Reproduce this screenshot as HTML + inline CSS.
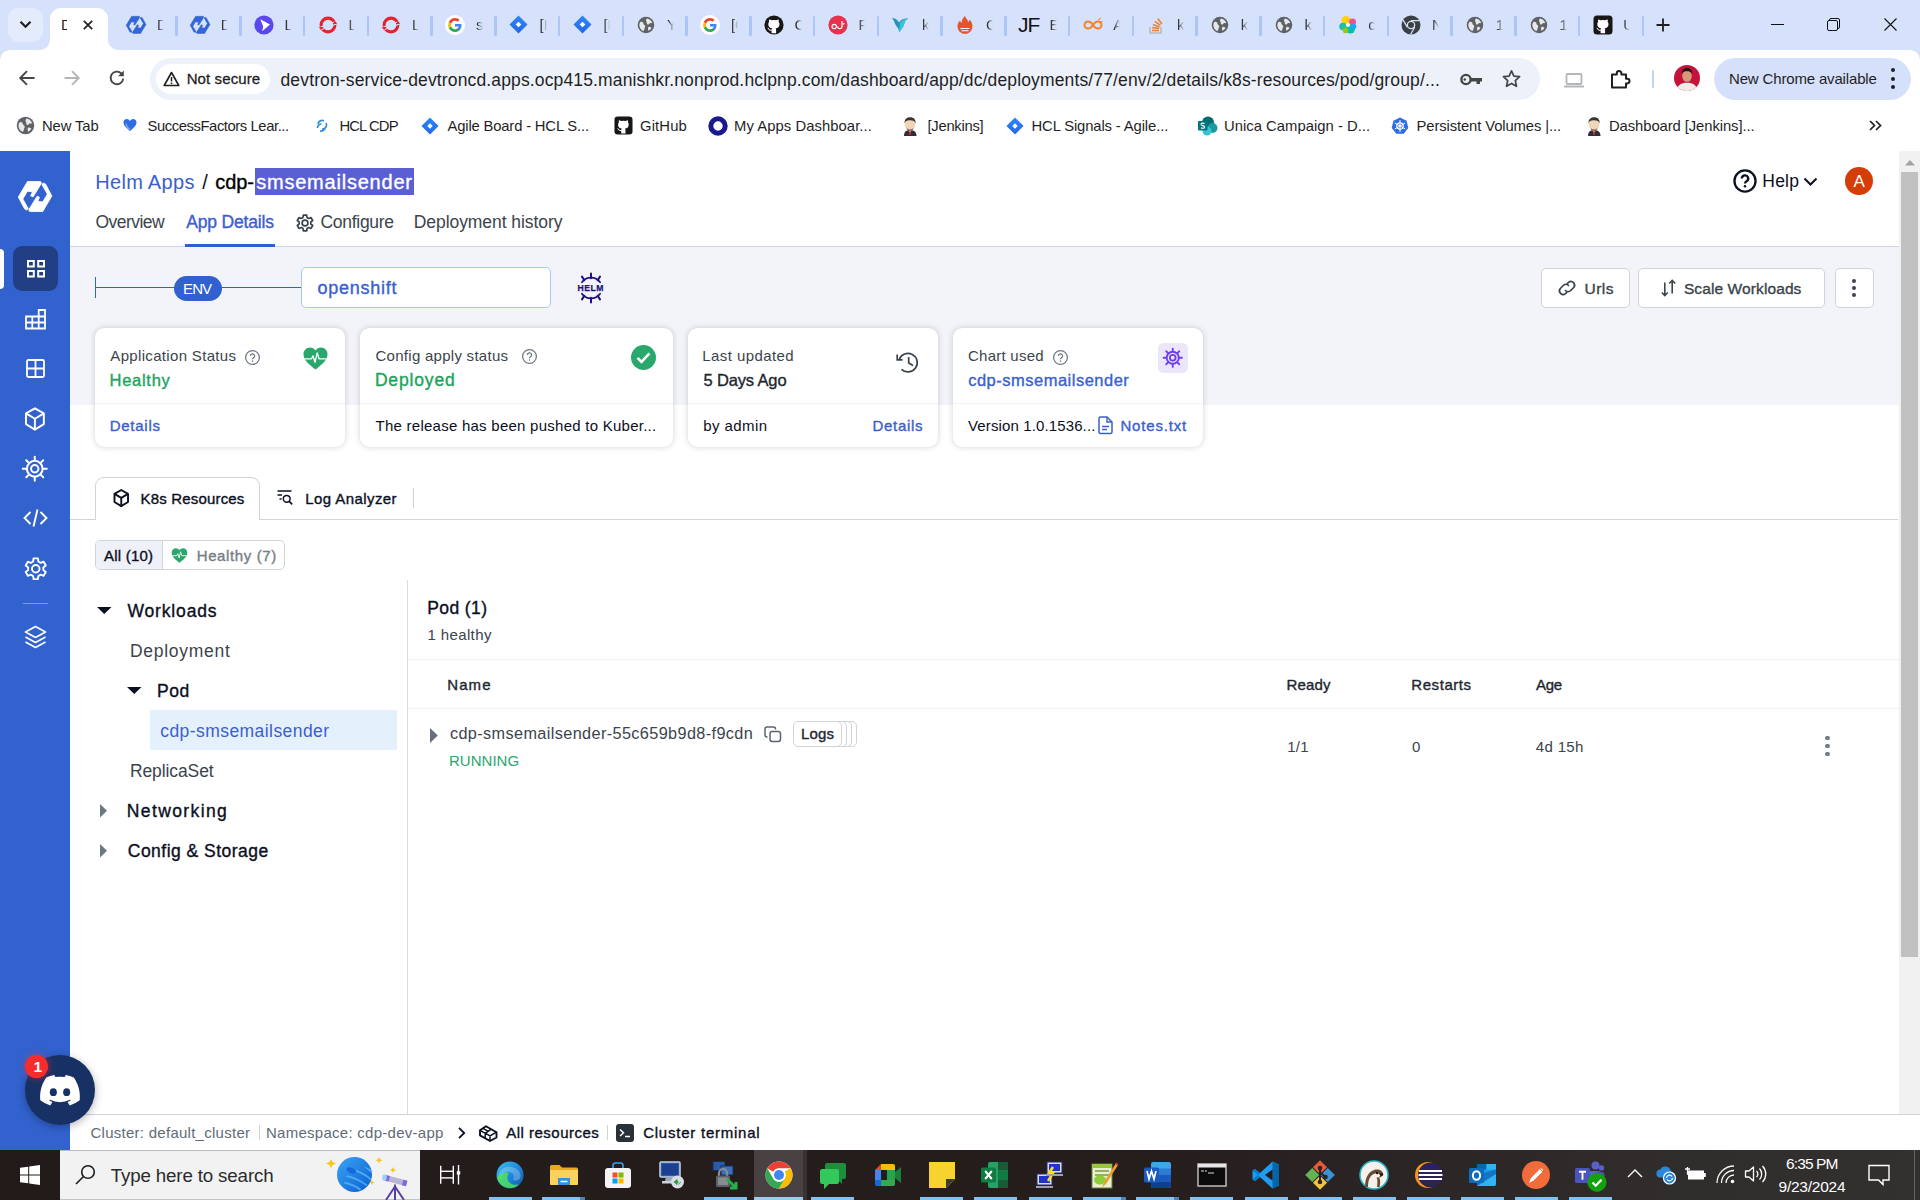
<!DOCTYPE html>
<html lang="en">
<head>
<meta charset="utf-8">
<title>cdp-smsemailsender - Helm Apps</title>
<style>
*{box-sizing:border-box;margin:0;padding:0}
html,body{width:1920px;height:1200px;overflow:hidden;background:#fff}
body{font-family:"Liberation Sans",sans-serif;color:#000;position:relative}
.a{position:absolute;display:block}
.t{position:absolute;white-space:nowrap;display:block}
svg{position:absolute;overflow:visible}
</style>
</head>
<body>
<div class="a" style="left:0px;top:150px;width:1920px;height:1000px;background:#fff;"></div>
<div class="a" style="left:70px;top:247px;width:1829px;height:158px;background:#f3f4f9;"></div>
<div class="a" style="left:70px;top:246px;width:1829px;height:1px;background:#d3d8de;"></div>
<div class="a" style="left:0px;top:151px;width:70px;height:999px;background:#3262ce;"></div>
<svg style="left:18.3px;top:180.8px" width="34.2" height="31.1" viewBox="8.600 9.100 34 29.900" preserveAspectRatio="none"><g fill="#fff" stroke="#fff" stroke-width=".8" stroke-linejoin="round"><path d="M18 9.600L31 9.600L32 11.200L23.600 24.400L21.200 23.400L23 19.400L18 18.900L13.400 26.400L18.800 35.600L17.200 37L15.200 36L8.900 24.600Z"/><path d="M18 9.600L31 9.600L32 11.200L23.600 24.400L21.200 23.400L23 19.400L18 18.900L13.400 26.400L18.800 35.600L17.200 37L15.200 36L8.900 24.600Z" transform="rotate(180 25.600 24.040)"/></g></svg>
<div class="a" style="left:0px;top:249px;width:4px;height:40px;background:#fff;border-radius:0 4px 4px 0;"></div>
<div class="a" style="left:13px;top:246px;width:45px;height:45px;background:#223f86;border-radius:9px;"></div>
<svg style="left:26.500px;top:260px" width="18" height="17.500" viewBox="0 0 18 17.500"><g fill="none" stroke="#fff" stroke-width="2"><rect x="1" y="1" width="5.800" height="5.500"/><rect x="11.200" y="1" width="5.800" height="5.500"/><rect x="1" y="11" width="5.800" height="5.500"/><rect x="11.200" y="11" width="5.800" height="5.500"/></g></svg>
<svg style="left:25px;top:308.500px" width="21" height="20.500" viewBox="0 0 21 20.500"><g fill="none" stroke="#fff" stroke-width="1.800"><path d="M13.700 1H20v18.500H1V7.500h12.700z"/><path d="M7.300 7.500v12M13.700 7.500v12M1 13.500h19M13.700 7.500H20"/></g></svg>
<svg style="left:26px;top:359px" width="19" height="19" viewBox="0 0 19 19"><g fill="none" stroke="#fff" stroke-width="1.800"><rect x="1" y="1" width="17" height="17" rx="1.500"/><path d="M9.500 1v17M1 9.500h17"/></g></svg>
<svg style="left:24.4px;top:406.8px" width="21.8" height="24.0" viewBox="0 0 20 22"><path d="M10 1.200l8.200 4.700v9.800L10 20.800 1.800 15.700V5.900z" fill="none" stroke="#fff" stroke-width="1.8" stroke-linejoin="round"/><path d="M1.800 5.900L10 10.800l8.200-4.900M10 10.800v10" fill="none" stroke="#fff" stroke-width="1.8" stroke-linejoin="round"/></svg>
<svg style="left:22.25px;top:455.75px" width="25.5" height="25.5" viewBox="0 0 20 20"><circle cx="10" cy="10" r="6.200" fill="none" stroke="#fff" stroke-width="1.6"/><circle cx="10" cy="10" r="2.900" fill="none" stroke="#fff" stroke-width="1.6"/><path d="M10 .6v2.600" stroke="#fff" stroke-width="1.6" stroke-linecap="round" transform="rotate(0 10 10)"/><path d="M10 .6v2.600" stroke="#fff" stroke-width="1.6" stroke-linecap="round" transform="rotate(45 10 10)"/><path d="M10 .6v2.600" stroke="#fff" stroke-width="1.6" stroke-linecap="round" transform="rotate(90 10 10)"/><path d="M10 .6v2.600" stroke="#fff" stroke-width="1.6" stroke-linecap="round" transform="rotate(135 10 10)"/><path d="M10 .6v2.600" stroke="#fff" stroke-width="1.6" stroke-linecap="round" transform="rotate(180 10 10)"/><path d="M10 .6v2.600" stroke="#fff" stroke-width="1.6" stroke-linecap="round" transform="rotate(225 10 10)"/><path d="M10 .6v2.600" stroke="#fff" stroke-width="1.6" stroke-linecap="round" transform="rotate(270 10 10)"/><path d="M10 .6v2.600" stroke="#fff" stroke-width="1.6" stroke-linecap="round" transform="rotate(315 10 10)"/></svg>
<svg style="left:23px;top:508px" width="25" height="20" viewBox="0 0 25 20"><path d="M7.500 4L1.500 10l6 6M17.500 4l6 6-6 6M14.500 1.500l-4 17" fill="none" stroke="#fff" stroke-width="1.900"/></svg>
<svg style="left:23.65px;top:556.95px" width="23.5" height="23.5" viewBox="-9 -9 18 18"><path d="M2.02 -5.54L1.68 -7.92L-1.68 -7.92L-2.02 -5.54L-3.79 -4.52L-6.02 -5.42L-7.70 -2.50L-5.81 -1.02L-5.81 1.02L-7.70 2.50L-6.02 5.42L-3.79 4.52L-2.02 5.54L-1.68 7.92L1.68 7.92L2.02 5.54L3.79 4.52L6.02 5.42L7.70 2.50L5.81 1.02L5.81 -1.02L7.70 -2.50L6.02 -5.42L3.79 -4.52Z" fill="none" stroke="#fff" stroke-width="1.46" stroke-linejoin="round"/><circle cx="0" cy="0" r="2.900" fill="none" stroke="#fff" stroke-width="1.46"/></svg>
<div class="a" style="left:23px;top:603px;width:25px;height:1px;background:rgba(255,255,255,.35);"></div>
<svg style="left:24px;top:625px" width="23" height="24" viewBox="0 0 23 24"><path d="M11.500 1.500L21.500 7l-10 5.500L1.500 7z M1.500 12l10 5.500 10-5.500M1.500 17l10 5.500 10-5.500" fill="none" stroke="#fff" stroke-width="1.700" stroke-linejoin="round"/></svg>
<span class="t" style="left:95.20px;top:172px;font-size:20px;height:20px;line-height:20px;color:#3a60cd;letter-spacing:0.311px;">Helm Apps</span>
<span class="t" style="left:202.30px;top:172px;font-size:20px;height:20px;line-height:20px;color:#0b0f22;">/</span>
<span class="t" style="left:215.18px;top:172px;font-size:20px;height:20px;line-height:20px;color:#000;-webkit-text-stroke:0.36px #000;letter-spacing:-0.035px;">cdp-</span>
<div class="a" style="left:255px;top:168px;width:159px;height:27px;background:#5a60d3;"></div>
<span class="t" style="left:256.18px;top:172px;font-size:20px;height:20px;line-height:20px;color:#fff;-webkit-text-stroke:0.36px #fff;letter-spacing:0.784px;">smsemailsender</span>
<span class="t" style="left:95.50px;top:214px;font-size:17.5px;height:17.5px;line-height:17.5px;color:#3b444c;letter-spacing:-0.542px;">Overview</span>
<span class="t" style="left:186.18px;top:214px;font-size:17.5px;height:17.5px;line-height:17.5px;color:#3a60cd;-webkit-text-stroke:0.36px #3a60cd;letter-spacing:-0.160px;">App Details</span>
<div class="a" style="left:185px;top:244px;width:90px;height:2.5px;background:#2d5fd1;"></div>
<svg style="left:296.0px;top:213.9px" width="18" height="18" viewBox="-9 -9 18 18"><path d="M2.02 -5.54L1.68 -7.92L-1.68 -7.92L-2.02 -5.54L-3.79 -4.52L-6.02 -5.42L-7.70 -2.50L-5.81 -1.02L-5.81 1.02L-7.70 2.50L-6.02 5.42L-3.79 4.52L-2.02 5.54L-1.68 7.92L1.68 7.92L2.02 5.54L3.79 4.52L6.02 5.42L7.70 2.50L5.81 1.02L5.81 -1.02L7.70 -2.50L6.02 -5.42L3.79 -4.52Z" fill="none" stroke="#3b444c" stroke-width="1.70" stroke-linejoin="round"/><circle cx="0" cy="0" r="2.900" fill="none" stroke="#3b444c" stroke-width="1.70"/></svg>
<span class="t" style="left:320.50px;top:214px;font-size:17.5px;height:17.5px;line-height:17.5px;color:#3b444c;letter-spacing:-0.293px;">Configure</span>
<span class="t" style="left:413.70px;top:214px;font-size:17.5px;height:17.5px;line-height:17.5px;color:#3b444c;letter-spacing:-0.055px;">Deployment history</span>
<svg style="left:1731.7px;top:167.9px" width="26" height="26" viewBox="0 0 18 18"><circle cx="9" cy="9" r="7.300" fill="none" stroke="#0b0f22" stroke-width="1.6"/><path d="M6.800 7.300a2.200 2.200 0 1 1 3.300 1.900c-.7.400-1.100.8-1.100 1.600" fill="none" stroke="#0b0f22" stroke-width="1.6"/><circle cx="9" cy="12.700" r=".85" fill="#0b0f22"/></svg>
<span class="t" style="left:1762.30px;top:173px;font-size:17.5px;height:17.5px;line-height:17.5px;color:#0b0f22;letter-spacing:0.214px;">Help</span>
<svg style="left:1803px;top:177px;" width="15" height="9" viewBox="0 0 15 9"><path d="M1.500 1.500l6 6 6-6" fill="none" stroke="#0b0f22" stroke-width="2"/></svg>
<div class="a" style="left:1845px;top:167px;width:28px;height:28px;background:#d53d06;border-radius:14px;"></div>
<span class="t" style="left:1853.50px;top:173px;font-size:17px;height:17px;line-height:17px;color:#fff;">A</span>
<div class="a" style="left:95px;top:287px;width:206px;height:1px;background:#3161d0;"></div>
<div class="a" style="left:95px;top:277px;width:1px;height:21px;background:#3161d0;"></div>
<div class="a" style="left:174px;top:275.5px;width:48px;height:25px;background:#3161d0;border-radius:12.5px;"></div>
<span class="t" style="left:183.10px;top:281px;font-size:15px;height:15px;line-height:15px;color:#fff;letter-spacing:-0.919px;">ENV</span>
<div class="a" style="left:301px;top:267px;width:250px;height:41px;background:#fff;border:1px solid #a9c7f6;border-radius:5px;"></div>
<span class="t" style="left:317.38px;top:279px;font-size:18px;height:18px;line-height:18px;color:#3a60cd;-webkit-text-stroke:0.36px #3a60cd;letter-spacing:0.761px;">openshift</span>
<svg style="left:576.100px;top:273.100px" width="30" height="30" viewBox="0 0 30 30"><path d="M5.900 9.300A11.250 11.250 0 0 1 24.100 9.300" fill="none" stroke="#1d1080" stroke-width="1.700" stroke-linecap="round"/><path d="M15 .6V5.200M6 3.600L8.300 7.200M24 3.600L21.700 7.200" fill="none" stroke="#1d1080" stroke-width="2" stroke-linecap="round"/><g transform="matrix(1 0 0 -1 0 30)"><path d="M5.900 9.300A11.250 11.250 0 0 1 24.100 9.300" fill="none" stroke="#1d1080" stroke-width="1.700" stroke-linecap="round"/><path d="M15 .6V5.200M6 3.600L8.300 7.200M24 3.600L21.700 7.200" fill="none" stroke="#1d1080" stroke-width="2" stroke-linecap="round"/></g><text x="1.500" y="18.300" font-family="Liberation Sans,sans-serif" font-weight="700" font-size="8.600" textLength="26" lengthAdjust="spacing" fill="#1d1080" stroke="#1d1080" stroke-width=".25">HELM</text></svg>
<div class="a" style="left:1541px;top:268px;width:89px;height:40px;background:#fff;border:1px solid #d0d4d9;border-radius:5px;"></div>
<div class="a" style="left:1638px;top:268px;width:187px;height:40px;background:#fff;border:1px solid #d0d4d9;border-radius:5px;"></div>
<div class="a" style="left:1835px;top:268px;width:39px;height:40px;background:#fff;border:1px solid #d0d4d9;border-radius:5px;"></div>
<svg style="left:1558px;top:280px;" width="18" height="16" viewBox="0 0 18 16"><path d="M7.500 10.500a3.700 3.700 0 0 0 5.200 0l3-3a3.700 3.700 0 0 0-5.200-5.200l-1 1M10.500 5.500a3.700 3.700 0 0 0-5.200 0l-3 3a3.700 3.700 0 0 0 5.200 5.200l1-1" fill="none" stroke="#3b444c" stroke-width="1.700" stroke-linecap="round"/></svg>
<span class="t" style="left:1584.48px;top:281px;font-size:15.5px;height:15.5px;line-height:15.5px;color:#3b444c;-webkit-text-stroke:0.36px #3b444c;letter-spacing:0.514px;">Urls</span>
<svg style="left:1661px;top:279px;" width="15" height="18" viewBox="0 0 15 18"><path d="M3.800 3.500v13M.8 13.500l3 3 3-3M11.200 14.500v-13M8.200 4.500l3-3 3 3" fill="none" stroke="#3b444c" stroke-width="1.600"/></svg>
<span class="t" style="left:1683.88px;top:281px;font-size:15.5px;height:15.5px;line-height:15.5px;color:#3b444c;-webkit-text-stroke:0.36px #3b444c;letter-spacing:0.105px;">Scale Workloads</span>
<div class="a" style="left:1852.4px;top:279px;width:4px;height:4px;background:#3b444c;border-radius:2px;"></div>
<div class="a" style="left:1852.4px;top:286px;width:4px;height:4px;background:#3b444c;border-radius:2px;"></div>
<div class="a" style="left:1852.4px;top:293px;width:4px;height:4px;background:#3b444c;border-radius:2px;"></div>
<div class="a" style="left:95px;top:328px;width:250px;height:119px;background:#fff;border-radius:9px;box-shadow:0 0 6px rgba(10,15,30,.17),0 0 1px rgba(10,15,30,.12);"><i class="a" style="left:0;right:0;top:75px;height:1px;background:#edf1f5"></i></div>
<div class="a" style="left:360px;top:328px;width:313px;height:119px;background:#fff;border-radius:9px;box-shadow:0 0 6px rgba(10,15,30,.17),0 0 1px rgba(10,15,30,.12);"><i class="a" style="left:0;right:0;top:75px;height:1px;background:#edf1f5"></i></div>
<div class="a" style="left:688px;top:328px;width:250px;height:119px;background:#fff;border-radius:9px;box-shadow:0 0 6px rgba(10,15,30,.17),0 0 1px rgba(10,15,30,.12);"><i class="a" style="left:0;right:0;top:75px;height:1px;background:#edf1f5"></i></div>
<div class="a" style="left:953px;top:328px;width:250px;height:119px;background:#fff;border-radius:9px;box-shadow:0 0 6px rgba(10,15,30,.17),0 0 1px rgba(10,15,30,.12);"><i class="a" style="left:0;right:0;top:75px;height:1px;background:#edf1f5"></i></div>
<span class="t" style="left:110.30px;top:348px;font-size:15px;height:15px;line-height:15px;color:#3b444c;letter-spacing:0.331px;">Application Status</span>
<svg style="left:244.0px;top:348.5px" width="17.0" height="17.0" viewBox="0 0 18 18"><circle cx="9" cy="9" r="7.300" fill="none" stroke="#6b7783" stroke-width="1.3"/><path d="M6.800 7.300a2.200 2.200 0 1 1 3.300 1.900c-.7.400-1.100.8-1.100 1.600" fill="none" stroke="#6b7783" stroke-width="1.3"/><circle cx="9" cy="12.700" r=".85" fill="#6b7783"/></svg>
<svg style="left:302.5px;top:346.5px" width="25" height="23" viewBox="0 0 25 23"><path d="M12.500 22.500C6 17.500.5 13 .5 7.200.5 3.400 3.400.5 7 .5c2.200 0 4.300 1.200 5.500 3 1.200-1.800 3.300-3 5.500-3 3.600 0 6.500 2.900 6.500 6.700 0 5.800-5.500 10.300-12 15.300z" fill="#2aa76c"/><path d="M1.500 11.800h7l1.500-3 2 6.500 2.200-9.500 1.800 6h7.500" fill="none" stroke="#fff" stroke-width="1.300" stroke-linejoin="round"/></svg>
<span class="t" style="left:109.48px;top:372px;font-size:16.5px;height:16.5px;line-height:16.5px;color:#21a35d;-webkit-text-stroke:0.36px #21a35d;letter-spacing:0.741px;">Healthy</span>
<span class="t" style="left:109.68px;top:418px;font-size:15px;height:15px;line-height:15px;color:#3a60cd;-webkit-text-stroke:0.36px #3a60cd;letter-spacing:0.748px;">Details</span>
<span class="t" style="left:375.50px;top:348px;font-size:15px;height:15px;line-height:15px;color:#3b444c;letter-spacing:0.274px;">Config apply status</span>
<svg style="left:521.0px;top:348.0px" width="17.0" height="17.0" viewBox="0 0 18 18"><circle cx="9" cy="9" r="7.300" fill="none" stroke="#6b7783" stroke-width="1.3"/><path d="M6.800 7.300a2.200 2.200 0 1 1 3.300 1.900c-.7.400-1.100.8-1.100 1.600" fill="none" stroke="#6b7783" stroke-width="1.3"/><circle cx="9" cy="12.700" r=".85" fill="#6b7783"/></svg>
<svg style="left:630.500px;top:345.300px" width="25" height="25" viewBox="0 0 25 25"><circle cx="12.500" cy="12.500" r="12.500" fill="#2aa76c"/><path d="M6.500 12.800l4 4 8-8.500" fill="none" stroke="#fff" stroke-width="2.600"/></svg>
<span class="t" style="left:374.88px;top:372px;font-size:17.5px;height:17.5px;line-height:17.5px;color:#21a35d;-webkit-text-stroke:0.36px #21a35d;letter-spacing:0.848px;">Deployed</span>
<span class="t" style="left:375.50px;top:418px;font-size:15px;height:15px;line-height:15px;color:#0b0f22;letter-spacing:0.254px;">The release has been pushed to Kuber...</span>
<span class="t" style="left:702.30px;top:348px;font-size:15px;height:15px;line-height:15px;color:#3b444c;letter-spacing:0.418px;">Last updated</span>
<span class="t" style="left:703.48px;top:372px;font-size:16.5px;height:16.5px;line-height:16.5px;color:#1d262f;-webkit-text-stroke:0.36px #1d262f;letter-spacing:-0.142px;">5 Days Ago</span>
<svg style="left:895.500px;top:351px" width="24" height="23" viewBox="0 0 24 23"><path d="M3.200 8.500A9.300 9.300 0 1 1 5.500 18.300" fill="none" stroke="#3b444c" stroke-width="1.700"/><path d="M1.200 3.500v5.300h5.300" fill="none" stroke="#3b444c" stroke-width="1.700"/><path d="M12.700 6v6l4.300 2.600" fill="none" stroke="#3b444c" stroke-width="1.700"/></svg>
<span class="t" style="left:703.30px;top:418px;font-size:15px;height:15px;line-height:15px;color:#0b0f22;letter-spacing:0.411px;">by admin</span>
<span class="t" style="left:872.48px;top:418px;font-size:15px;height:15px;line-height:15px;color:#3a60cd;-webkit-text-stroke:0.36px #3a60cd;letter-spacing:0.698px;">Details</span>
<span class="t" style="left:968.00px;top:348px;font-size:15px;height:15px;line-height:15px;color:#3b444c;letter-spacing:0.252px;">Chart used</span>
<svg style="left:1052.0px;top:348.5px" width="17.0" height="17.0" viewBox="0 0 18 18"><circle cx="9" cy="9" r="7.300" fill="none" stroke="#6b7783" stroke-width="1.3"/><path d="M6.800 7.300a2.200 2.200 0 1 1 3.300 1.900c-.7.400-1.100.8-1.100 1.600" fill="none" stroke="#6b7783" stroke-width="1.3"/><circle cx="9" cy="12.700" r=".85" fill="#6b7783"/></svg>
<div class="a" style="left:1158px;top:343px;width:30px;height:30px;background:#ebe7f9;border-radius:5.500px;"></div>
<svg style="left:1163.25px;top:348.25px" width="19.5" height="19.5" viewBox="0 0 20 20"><circle cx="10" cy="10" r="6.200" fill="none" stroke="#6d40e8" stroke-width="1.9"/><circle cx="10" cy="10" r="2.900" fill="none" stroke="#6d40e8" stroke-width="1.9"/><path d="M10 .6v2.600" stroke="#6d40e8" stroke-width="1.9" stroke-linecap="round" transform="rotate(0 10 10)"/><path d="M10 .6v2.600" stroke="#6d40e8" stroke-width="1.9" stroke-linecap="round" transform="rotate(45 10 10)"/><path d="M10 .6v2.600" stroke="#6d40e8" stroke-width="1.9" stroke-linecap="round" transform="rotate(90 10 10)"/><path d="M10 .6v2.600" stroke="#6d40e8" stroke-width="1.9" stroke-linecap="round" transform="rotate(135 10 10)"/><path d="M10 .6v2.600" stroke="#6d40e8" stroke-width="1.9" stroke-linecap="round" transform="rotate(180 10 10)"/><path d="M10 .6v2.600" stroke="#6d40e8" stroke-width="1.9" stroke-linecap="round" transform="rotate(225 10 10)"/><path d="M10 .6v2.600" stroke="#6d40e8" stroke-width="1.9" stroke-linecap="round" transform="rotate(270 10 10)"/><path d="M10 .6v2.600" stroke="#6d40e8" stroke-width="1.9" stroke-linecap="round" transform="rotate(315 10 10)"/></svg>
<span class="t" style="left:968.18px;top:372px;font-size:16.5px;height:16.5px;line-height:16.5px;color:#3a60cd;-webkit-text-stroke:0.36px #3a60cd;letter-spacing:0.495px;">cdp-smsemailsender</span>
<span class="t" style="left:968.00px;top:418px;font-size:15px;height:15px;line-height:15px;color:#0b0f22;letter-spacing:0.127px;">Version 1.0.1536...</span>
<svg style="left:1097.5px;top:415.5px;" width="15" height="18.5" viewBox="0 0 15 18.500"><path d="M1 2.500A1.500 1.500 0 0 1 2.500 1h6.500l5 5v10A1.500 1.500 0 0 1 12.500 17.500h-10A1.500 1.500 0 0 1 1 16z" fill="none" stroke="#3a60cd" stroke-width="1.500"/><path d="M9 1v5h5M4 10.500h7M4 13.500h5" fill="none" stroke="#3a60cd" stroke-width="1.400"/></svg>
<span class="t" style="left:1120.48px;top:418px;font-size:15px;height:15px;line-height:15px;color:#3a60cd;-webkit-text-stroke:0.36px #3a60cd;letter-spacing:0.815px;">Notes.txt</span>
<div class="a" style="left:70px;top:519px;width:1828px;height:1px;background:#d0d4d9;"></div>
<div class="a" style="left:95px;top:477px;width:165px;height:43px;background:#fff;border:1px solid #d0d4d9;border-bottom:none;border-radius:9px 9px 0 0;"></div>
<svg style="left:112.5px;top:488.5px" width="16.5" height="18.2" viewBox="0 0 20 22"><path d="M10 1.200l8.200 4.700v9.800L10 20.800 1.800 15.700V5.900z" fill="none" stroke="#0b0f22" stroke-width="2.3" stroke-linejoin="round"/><path d="M1.800 5.900L10 10.800l8.200-4.900M10 10.800v10" fill="none" stroke="#0b0f22" stroke-width="2.3" stroke-linejoin="round"/></svg>
<span class="t" style="left:140.58px;top:491px;font-size:15px;height:15px;line-height:15px;color:#0b0f22;-webkit-text-stroke:0.36px #0b0f22;letter-spacing:0.169px;">K8s Resources</span>
<svg style="left:277px;top:490px;" width="16" height="16" viewBox="0 0 16 16"><path d="M.5 1h14M.5 5h4.500M2.500 9h2" stroke="#0b0f22" stroke-width="1.500"/><circle cx="9.700" cy="8.800" r="3.400" fill="none" stroke="#0b0f22" stroke-width="1.500"/><path d="M12.200 11.300l3 3" stroke="#0b0f22" stroke-width="1.700"/></svg>
<span class="t" style="left:305.18px;top:491px;font-size:15px;height:15px;line-height:15px;color:#0b0f22;-webkit-text-stroke:0.36px #0b0f22;letter-spacing:0.426px;">Log Analyzer</span>
<div class="a" style="left:413px;top:488px;width:1px;height:20px;background:#d0d4d9;"></div>
<div class="a" style="left:95px;top:540px;width:190px;height:30px;background:#fff;border:1px solid #d0d4d9;border-radius:5px;"></div>
<div class="a" style="left:96px;top:541px;width:65.5px;height:28px;background:#eef1f7;border-radius:4px 0 0 4px;"></div>
<div class="a" style="left:161.5px;top:541px;width:1px;height:28px;background:#d0d4d9;"></div>
<span class="t" style="left:103.98px;top:548px;font-size:15px;height:15px;line-height:15px;color:#0b0f22;-webkit-text-stroke:0.36px #0b0f22;letter-spacing:0.218px;">All (10)</span>
<svg style="left:170.5px;top:548px" width="17" height="15" viewBox="0 0 25 23"><path d="M12.500 22.500C6 17.500.5 13 .5 7.200.5 3.400 3.400.5 7 .5c2.200 0 4.300 1.200 5.500 3 1.200-1.800 3.300-3 5.500-3 3.600 0 6.500 2.900 6.500 6.700 0 5.800-5.500 10.300-12 15.300z" fill="#2aa76c"/><path d="M1.500 11.800h7l1.500-3 2 6.500 2.200-9.500 1.800 6h7.500" fill="none" stroke="#fff" stroke-width="1.300" stroke-linejoin="round"/></svg>
<span class="t" style="left:196.68px;top:548px;font-size:15px;height:15px;line-height:15px;color:#767d84;-webkit-text-stroke:0.36px #767d84;letter-spacing:0.628px;">Healthy (7)</span>
<svg style="left:96.5px;top:606.5px" width="14.5" height="7" viewBox="0 0 14.5 7"><path d="M0 0h14.5L7.25 7z" fill="#0b0f22"/></svg>
<span class="t" style="left:127.38px;top:603px;font-size:17.5px;height:17.5px;line-height:17.5px;color:#0b0f22;-webkit-text-stroke:0.36px #0b0f22;letter-spacing:0.855px;">Workloads</span>
<span class="t" style="left:129.90px;top:643px;font-size:17.5px;height:17.5px;line-height:17.5px;color:#3b444c;letter-spacing:0.720px;">Deployment</span>
<svg style="left:126.5px;top:686.5px" width="14.5" height="7" viewBox="0 0 14.5 7"><path d="M0 0h14.5L7.25 7z" fill="#0b0f22"/></svg>
<span class="t" style="left:156.88px;top:683px;font-size:17.5px;height:17.5px;line-height:17.5px;color:#0b0f22;-webkit-text-stroke:0.36px #0b0f22;letter-spacing:0.667px;">Pod</span>
<div class="a" style="left:150px;top:710px;width:247px;height:40px;background:#e5f0fd;"></div>
<span class="t" style="left:160.20px;top:723px;font-size:17.5px;height:17.5px;line-height:17.5px;color:#3a60cd;letter-spacing:0.440px;">cdp-smsemailsender</span>
<span class="t" style="left:129.90px;top:763px;font-size:17.5px;height:17.5px;line-height:17.5px;color:#3b444c;letter-spacing:-0.096px;">ReplicaSet</span>
<svg style="left:100px;top:803.5px" width="7" height="13.5" viewBox="0 0 7 13.5"><path d="M0 0v13.5L7 6.75z" fill="#6b7783"/></svg>
<span class="t" style="left:126.78px;top:803px;font-size:17.5px;height:17.5px;line-height:17.5px;color:#0b0f22;-webkit-text-stroke:0.36px #0b0f22;letter-spacing:1.393px;">Networking</span>
<svg style="left:100px;top:843.5px" width="7" height="13.5" viewBox="0 0 7 13.5"><path d="M0 0v13.5L7 6.75z" fill="#6b7783"/></svg>
<span class="t" style="left:127.78px;top:843px;font-size:17.5px;height:17.5px;line-height:17.5px;color:#0b0f22;-webkit-text-stroke:0.36px #0b0f22;letter-spacing:0.480px;">Config &amp; Storage</span>
<div class="a" style="left:407px;top:580px;width:1px;height:534px;background:#d9dde2;"></div>
<span class="t" style="left:427.28px;top:600px;font-size:17.5px;height:17.5px;line-height:17.5px;color:#0b0f22;-webkit-text-stroke:0.36px #0b0f22;letter-spacing:0.397px;">Pod (1)</span>
<span class="t" style="left:427.40px;top:627px;font-size:15px;height:15px;line-height:15px;color:#3b444c;letter-spacing:0.390px;">1 healthy</span>
<div class="a" style="left:408px;top:659px;width:1491px;height:1px;background:#edf1f5;"></div>
<span class="t" style="left:447.28px;top:677px;font-size:15px;height:15px;line-height:15px;color:#1d262f;-webkit-text-stroke:0.36px #1d262f;letter-spacing:1.090px;">Name</span>
<span class="t" style="left:1286.58px;top:677px;font-size:15px;height:15px;line-height:15px;color:#1d262f;-webkit-text-stroke:0.36px #1d262f;letter-spacing:0.145px;">Ready</span>
<span class="t" style="left:1411.28px;top:677px;font-size:15px;height:15px;line-height:15px;color:#1d262f;-webkit-text-stroke:0.36px #1d262f;letter-spacing:0.570px;">Restarts</span>
<span class="t" style="left:1535.88px;top:677px;font-size:15px;height:15px;line-height:15px;color:#1d262f;-webkit-text-stroke:0.36px #1d262f;letter-spacing:-0.204px;">Age</span>
<div class="a" style="left:408px;top:708px;width:1491px;height:1px;background:#edf1f5;"></div>
<svg style="left:430px;top:727.5px" width="7.8" height="15" viewBox="0 0 7.8 15"><path d="M0 0v15L7.8 7.5z" fill="#666f7b"/></svg>
<span class="t" style="left:449.90px;top:725px;font-size:16.25px;height:16.25px;line-height:16.25px;color:#3b444c;letter-spacing:0.382px;">cdp-smsemailsender-55c659b9d8-f9cdn</span>
<svg style="left:763.5px;top:725.5px;" width="17.5" height="16.5" viewBox="0 0 17.500 16.500"><rect x="6" y="5.500" width="10.500" height="10" rx="2.200" fill="none" stroke="#596470" stroke-width="1.500"/><path d="M3.500 11H3A2 2 0 0 1 1 9V3A2 2 0 0 1 3 1h6.500a2 2 0 0 1 2 2v.5" fill="none" stroke="#596470" stroke-width="1.500"/></svg>
<div class="a" style="left:808px;top:721px;width:49px;height:26px;background:#fff;border:1px solid #d0d4d9;border-radius:5px;"></div>
<div class="a" style="left:803px;top:721px;width:49px;height:26px;background:#fff;border:1px solid #d0d4d9;border-radius:5px;"></div>
<div class="a" style="left:798px;top:721px;width:49px;height:26px;background:#fff;border:1px solid #d0d4d9;border-radius:5px;"></div>
<div class="a" style="left:792.5px;top:721px;width:49px;height:26px;background:#fff;border:1px solid #d0d4d9;border-radius:5px;"></div>
<span class="t" style="left:800.88px;top:726px;font-size:15px;height:15px;line-height:15px;color:#1d262f;-webkit-text-stroke:0.36px #1d262f;letter-spacing:0.238px;">Logs</span>
<span class="t" style="left:448.90px;top:753px;font-size:15px;height:15px;line-height:15px;color:#2aa76c;letter-spacing:0.045px;">RUNNING</span>
<span class="t" style="left:1287.20px;top:739px;font-size:15px;height:15px;line-height:15px;color:#3b444c;letter-spacing:0.245px;">1/1</span>
<span class="t" style="left:1412.10px;top:739px;font-size:15px;height:15px;line-height:15px;color:#3b444c;">0</span>
<span class="t" style="left:1535.70px;top:739px;font-size:15px;height:15px;line-height:15px;color:#3b444c;letter-spacing:0.373px;">4d 15h</span>
<div class="a" style="left:1825.3px;top:735.6px;width:4.8px;height:4.8px;background:#727a83;border-radius:2.400px;"></div>
<div class="a" style="left:1825.3px;top:743.6px;width:4.8px;height:4.8px;background:#727a83;border-radius:2.400px;"></div>
<div class="a" style="left:1825.3px;top:751.6px;width:4.8px;height:4.8px;background:#727a83;border-radius:2.400px;"></div>
<div class="a" style="left:70px;top:1113.5px;width:1850px;height:1px;background:#d0d4d9;"></div>
<span class="t" style="left:90.50px;top:1125px;font-size:15px;height:15px;line-height:15px;color:#5f6b76;letter-spacing:0.265px;">Cluster: default_cluster</span>
<div class="a" style="left:258.5px;top:1125px;width:1px;height:15px;background:#d0d4d9;"></div>
<span class="t" style="left:266.00px;top:1125px;font-size:15px;height:15px;line-height:15px;color:#5f6b76;letter-spacing:0.266px;">Namespace: cdp-dev-app</span>
<svg style="left:457.5px;top:1127px;" width="7" height="12" viewBox="0 0 7 12"><path d="M1 .8l5.200 5.200L1 11.200" fill="none" stroke="#0b0f22" stroke-width="1.800"/></svg>
<svg style="left:479px;top:1124.500px" width="18.500" height="17" viewBox="0 0 18.500 17"><path d="M1 5.300L7 1.200l10.500 6v5.300L11 16 1 10.300z" fill="#fff" stroke="#0b0f22" stroke-width="1.900" stroke-linejoin="round"/><path d="M1 5.300l10 5.700 6.500-3.800M11 11v5M6.200 8.300v5M4 3.300l5.200 3M12.200 4.200L6.200 8.300" fill="none" stroke="#0b0f22" stroke-width="1.500"/></svg>
<span class="t" style="left:506.18px;top:1125px;font-size:15px;height:15px;line-height:15px;color:#0b0f22;-webkit-text-stroke:0.36px #0b0f22;letter-spacing:0.495px;">All resources</span>
<div class="a" style="left:607px;top:1125px;width:1px;height:15px;background:#d0d4d9;"></div>
<svg style="left:616px;top:1123.500px" width="18" height="18" viewBox="0 0 18 18"><rect width="18" height="18" rx="3" fill="#2a3038"/><path d="M4 5.500l3.500 3.200L4 12M9 12.500h5" fill="none" stroke="#fff" stroke-width="1.500"/></svg>
<span class="t" style="left:643.18px;top:1125px;font-size:15px;height:15px;line-height:15px;color:#0b0f22;-webkit-text-stroke:0.36px #0b0f22;letter-spacing:0.763px;">Cluster terminal</span>
<div class="a" style="left:25px;top:1055px;width:70px;height:70px;background:#183164;border-radius:35px;box-shadow:0 2px 8px rgba(0,0,0,.3);"></div>
<svg style="left:40px;top:1074.500px" width="40" height="30.500" viewBox="0 0 42 32"><path d="M35.500 2.700A34 34 0 0 0 27 0l-1.100 2.200a31 31 0 0 0-9.800 0L15 0a34 34 0 0 0-8.500 2.700C1.100 10.800-.4 18.700.3 26.500A34 34 0 0 0 10.800 32l2.200-3.700a22 22 0 0 1-3.500-1.700l.9-.7a24 24 0 0 0 21.200 0l.9.700a22 22 0 0 1-3.500 1.700l2.200 3.700a34 34 0 0 0 10.500-5.500c.9-9-1.500-16.800-6.200-23.800z" fill="#fff"/><ellipse cx="14" cy="18" rx="3.700" ry="4.100" fill="#183164"/><ellipse cx="28" cy="18" rx="3.700" ry="4.100" fill="#183164"/></svg>
<div class="a" style="left:25px;top:1055px;width:23px;height:23px;background:#f82c2c;border-radius:11.500px;box-shadow:0 0 7px rgba(255,50,50,.55);"></div>
<span class="t" style="left:33.50px;top:1059px;font-size:15.5px;height:15.5px;line-height:15.5px;color:#fff;font-weight:700;">1</span>
<div class="a" style="left:1899px;top:151px;width:21px;height:963px;background:#f1f1f1;"></div>
<div class="a" style="left:1901px;top:172px;width:17px;height:785px;background:#c1c1c1;"></div>
<svg style="left:1904.5px;top:159.5px;" width="10" height="5.5" viewBox="0 0 10 5.500"><path d="M0 5.500L5 0l5 5.500z" fill="#a3a3a3"/></svg>
<div class="a" style="left:0px;top:0px;width:1920px;height:62px;background:#d6e1fb;"></div>
<div class="a" style="left:8px;top:8px;width:35px;height:34px;background:#e4ebfc;border-radius:11px;"></div>
<svg style="left:19px;top:20px;" width="13" height="9" viewBox="0 0 13 9"><path d="M1.500 1.800L6.500 6.800 11.500 1.800" fill="none" stroke="#1f1f1f" stroke-width="2.200"/></svg>
<div class="a" style="left:50px;top:8px;width:58px;height:42px;background:#fff;border-radius:11px 11px 0 0;"></div>
<svg style="left:40px;top:40px;" width="10" height="10" viewBox="0 0 10 10"><path d="M10 0v10H0A10 10 0 0 0 10 0z" fill="#fff"/></svg>
<svg style="left:108px;top:40px;" width="10" height="10" viewBox="0 0 10 10"><path d="M0 0v10h10A10 10 0 0 1 0 0z" fill="#fff"/></svg>
<div class="a" style="left:61px;top:17px;width:6px;height:16px;overflow:hidden;font-size:15px;line-height:16px;color:#1f1f1f;white-space:nowrap">Devtron</div>
<svg style="left:83px;top:20px;" width="10" height="10" viewBox="0 0 10 10"><path d="M.8.800l8.400 8.400M9.200.800L.8 9.200" stroke="#1f1f1f" stroke-width="1.700"/></svg>
<svg style="left:125.9px;top:15.6px" width="20.2" height="17.8" viewBox="8.600 9.100 34 29.900" preserveAspectRatio="none"><g fill="#3465d4" stroke="#3465d4" stroke-width=".8" stroke-linejoin="round"><path d="M18 9.600L31 9.600L32 11.200L23.600 24.400L21.200 23.400L23 19.400L18 18.900L13.400 26.400L18.800 35.600L17.200 37L15.200 36L8.900 24.600Z"/><path d="M18 9.600L31 9.600L32 11.200L23.600 24.400L21.200 23.400L23 19.400L18 18.900L13.400 26.400L18.800 35.600L17.200 37L15.200 36L8.900 24.600Z" transform="rotate(180 25.600 24.040)"/></g></svg>
<div class="a" style="left:157.1px;top:16px;width:7px;height:18px;overflow:hidden;font-size:15px;line-height:18px;color:#333;white-space:nowrap;-webkit-mask-image:linear-gradient(90deg,#000 20%,transparent 100%);mask-image:linear-gradient(90deg,#000 20%,transparent 100%)">Devtron</div>
<div class="a" style="left:175.25px;top:15.500px;width:2.500px;height:20px;background:#adc4f7;border-radius:1.250px"></div>
<svg style="left:189.9px;top:15.6px" width="20.2" height="17.8" viewBox="8.600 9.100 34 29.900" preserveAspectRatio="none"><g fill="#3465d4" stroke="#3465d4" stroke-width=".8" stroke-linejoin="round"><path d="M18 9.600L31 9.600L32 11.200L23.600 24.400L21.200 23.400L23 19.400L18 18.900L13.400 26.400L18.800 35.600L17.200 37L15.200 36L8.900 24.600Z"/><path d="M18 9.600L31 9.600L32 11.200L23.600 24.400L21.200 23.400L23 19.400L18 18.900L13.400 26.400L18.800 35.600L17.200 37L15.200 36L8.900 24.600Z" transform="rotate(180 25.600 24.040)"/></g></svg>
<div class="a" style="left:220.8px;top:16px;width:7px;height:18px;overflow:hidden;font-size:15px;line-height:18px;color:#333;white-space:nowrap;-webkit-mask-image:linear-gradient(90deg,#000 20%,transparent 100%);mask-image:linear-gradient(90deg,#000 20%,transparent 100%)">Devtron</div>
<div class="a" style="left:239.00px;top:15.500px;width:2.500px;height:20px;background:#adc4f7;border-radius:1.250px"></div>
<svg style="left:253.5px;top:14.5px" width="20" height="20" viewBox="0 0 20 20"><circle cx="10" cy="10" r="9.600" fill="#5a47ee"/><path d="M6.300 4.300l9.700 5.200-7.800 6.700 1-4.600z" fill="#fff"/></svg>
<div class="a" style="left:284.6px;top:16px;width:7px;height:18px;overflow:hidden;font-size:15px;line-height:18px;color:#333;white-space:nowrap;-webkit-mask-image:linear-gradient(90deg,#000 20%,transparent 100%);mask-image:linear-gradient(90deg,#000 20%,transparent 100%)">Log in</div>
<div class="a" style="left:302.75px;top:15.500px;width:2.500px;height:20px;background:#adc4f7;border-radius:1.250px"></div>
<svg style="left:317.5px;top:14.5px" width="20" height="20" viewBox="0 0 20 20"><circle cx="10" cy="10" r="6.900" fill="none" stroke="#e1242d" stroke-width="3.100"/><path d="M-.5 13.200L20.500 5.600M-.5 15.900L20.500 8.300" stroke="#d6e1fb" stroke-width="1.100"/><path d="M.8 12.300l4.200-.4-1.800 3.400zM19.200 8.700l-4.200.4 1.800-3.400z" fill="#e1242d"/></svg>
<div class="a" style="left:348.4px;top:16px;width:7px;height:18px;overflow:hidden;font-size:15px;line-height:18px;color:#333;white-space:nowrap;-webkit-mask-image:linear-gradient(90deg,#000 20%,transparent 100%);mask-image:linear-gradient(90deg,#000 20%,transparent 100%)">Login</div>
<div class="a" style="left:366.50px;top:15.500px;width:2.500px;height:20px;background:#adc4f7;border-radius:1.250px"></div>
<svg style="left:381.0px;top:14.5px" width="20" height="20" viewBox="0 0 20 20"><circle cx="10" cy="10" r="6.900" fill="none" stroke="#e1242d" stroke-width="3.100"/><path d="M-.5 13.200L20.500 5.600M-.5 15.900L20.500 8.300" stroke="#d6e1fb" stroke-width="1.100"/><path d="M.8 12.300l4.200-.4-1.800 3.400zM19.200 8.700l-4.200.4 1.800-3.400z" fill="#e1242d"/></svg>
<div class="a" style="left:412.1px;top:16px;width:7px;height:18px;overflow:hidden;font-size:15px;line-height:18px;color:#333;white-space:nowrap;-webkit-mask-image:linear-gradient(90deg,#000 20%,transparent 100%);mask-image:linear-gradient(90deg,#000 20%,transparent 100%)">Login</div>
<div class="a" style="left:430.25px;top:15.500px;width:2.500px;height:20px;background:#adc4f7;border-radius:1.250px"></div>
<svg style="left:445.0px;top:14.5px" width="20" height="20" viewBox="0 0 20 20"><circle cx="10" cy="10" r="10" fill="#fff"/><path d="M16.500 10.200c0-.5 0-.9-.1-1.300H10v2.500h3.700c-.2.900-.7 1.600-1.400 2.100v1.700h2.200c1.300-1.200 2-3 2-5z" fill="#4285f4"/><path d="M10 17c1.900 0 3.500-.6 4.500-1.800l-2.200-1.700c-.6.400-1.400.7-2.300.7-1.800 0-3.300-1.200-3.800-2.800H3.900v1.800C5 15.500 7.300 17 10 17z" fill="#34a853"/><path d="M6.200 11.400c-.3-.9-.3-1.900 0-2.800V6.800H3.900c-1 2-1 4.400 0 6.400z" fill="#fbbc05"/><path d="M10 5.800c1 0 1.900.4 2.600 1l2-2C13.400 3.700 11.800 3 10 3 7.300 3 5 4.500 3.900 6.800l2.300 1.800c.5-1.600 2-2.800 3.800-2.800z" fill="#ea4335"/></svg>
<div class="a" style="left:475.9px;top:16px;width:7px;height:18px;overflow:hidden;font-size:15px;line-height:18px;color:#333;white-space:nowrap;-webkit-mask-image:linear-gradient(90deg,#000 20%,transparent 100%);mask-image:linear-gradient(90deg,#000 20%,transparent 100%)">search</div>
<div class="a" style="left:494.00px;top:15.500px;width:2.500px;height:20px;background:#adc4f7;border-radius:1.250px"></div>
<svg style="left:509.0px;top:15.0px" width="19" height="19" viewBox="0 0 20 20"><defs><linearGradient id="jg" x1="0" y1="0" x2="0" y2="1"><stop offset="0" stop-color="#2d86ff"/><stop offset="1" stop-color="#2468e6"/></linearGradient></defs><path d="M10 .5L19.500 10 10 19.500.5 10z" fill="url(#jg)"/><path d="M10 7L13 10 10 13 7 10z" fill="#fff"/></svg>
<div class="a" style="left:539.6px;top:16px;width:7px;height:18px;overflow:hidden;font-size:15px;line-height:18px;color:#333;white-space:nowrap;-webkit-mask-image:linear-gradient(90deg,#000 20%,transparent 100%);mask-image:linear-gradient(90deg,#000 20%,transparent 100%)">[HCL</div>
<div class="a" style="left:557.75px;top:15.500px;width:2.500px;height:20px;background:#adc4f7;border-radius:1.250px"></div>
<svg style="left:573.0px;top:15.0px" width="19" height="19" viewBox="0 0 20 20"><defs><linearGradient id="jg" x1="0" y1="0" x2="0" y2="1"><stop offset="0" stop-color="#2d86ff"/><stop offset="1" stop-color="#2468e6"/></linearGradient></defs><path d="M10 .5L19.500 10 10 19.500.5 10z" fill="url(#jg)"/><path d="M10 7L13 10 10 13 7 10z" fill="#fff"/></svg>
<div class="a" style="left:603.4px;top:16px;width:7px;height:18px;overflow:hidden;font-size:15px;line-height:18px;color:#333;white-space:nowrap;-webkit-mask-image:linear-gradient(90deg,#000 20%,transparent 100%);mask-image:linear-gradient(90deg,#000 20%,transparent 100%)">[HCL</div>
<div class="a" style="left:621.50px;top:15.500px;width:2.500px;height:20px;background:#adc4f7;border-radius:1.250px"></div>
<svg style="left:637.0px;top:15.5px" width="18" height="18" viewBox="0 0 20 20"><circle cx="10" cy="10" r="9.2" fill="#5f6368"/><path d="M4 6.5c2-.3 3 .6 3.2 2 .2 1.300 1.800 1.200 2 2.800.1 1.200-1 1.700-1 3.200 0 1-.6 1.800-1.400 2.200C4.200 15.300 2.600 12.800 2.600 10c0-1.300.5-2.500 1.400-3.500zM11 2.700c2.800.4 5.200 2.400 6 5.100-1 .4-1.700-.1-2.600.2-1 .300-.9 1.500-2 1.500-1.200 0-1.700-1-1.500-2 .2-1-.9-1.300-.9-2.300 0-1 .5-1.700 1-2.500zM13.500 12c1 0 2 .6 2.600 1.400-.7 1.300-1.800 2.400-3.100 3.100-.5-.6-.8-1.400-.8-2.300 0-1.200.4-2.200 1.300-2.200z" fill="#fff" opacity=".85"/></svg>
<div class="a" style="left:667.1px;top:16px;width:7px;height:18px;overflow:hidden;font-size:15px;line-height:18px;color:#333;white-space:nowrap;-webkit-mask-image:linear-gradient(90deg,#000 20%,transparent 100%);mask-image:linear-gradient(90deg,#000 20%,transparent 100%)">YouTube</div>
<div class="a" style="left:685.25px;top:15.500px;width:2.500px;height:20px;background:#adc4f7;border-radius:1.250px"></div>
<svg style="left:700.0px;top:14.5px" width="20" height="20" viewBox="0 0 20 20"><circle cx="10" cy="10" r="10" fill="#fff"/><path d="M16.500 10.200c0-.5 0-.9-.1-1.300H10v2.500h3.700c-.2.900-.7 1.600-1.400 2.100v1.700h2.200c1.300-1.200 2-3 2-5z" fill="#4285f4"/><path d="M10 17c1.900 0 3.500-.6 4.500-1.800l-2.200-1.700c-.6.400-1.400.7-2.300.7-1.800 0-3.300-1.200-3.800-2.800H3.900v1.800C5 15.500 7.300 17 10 17z" fill="#34a853"/><path d="M6.200 11.400c-.3-.9-.3-1.900 0-2.800V6.800H3.900c-1 2-1 4.400 0 6.400z" fill="#fbbc05"/><path d="M10 5.800c1 0 1.900.4 2.600 1l2-2C13.400 3.700 11.800 3 10 3 7.300 3 5 4.500 3.900 6.800l2.300 1.800c.5-1.600 2-2.800 3.800-2.800z" fill="#ea4335"/></svg>
<div class="a" style="left:730.9px;top:16px;width:7px;height:18px;overflow:hidden;font-size:15px;line-height:18px;color:#333;white-space:nowrap;-webkit-mask-image:linear-gradient(90deg,#000 20%,transparent 100%);mask-image:linear-gradient(90deg,#000 20%,transparent 100%)">[Google</div>
<div class="a" style="left:749.00px;top:15.500px;width:2.500px;height:20px;background:#adc4f7;border-radius:1.250px"></div>
<svg style="left:763.5px;top:14.5px" width="20" height="20" viewBox="0 0 20 20"><circle cx="10" cy="10" r="9.600" fill="#181616"/><path d="M7.600 18.300v-2.600c-2.400.5-3-1.100-3-1.100-.4-1-1-1.300-1-1.300-.8-.5.1-.5.1-.5.900.1 1.400.9 1.400.9.800 1.400 2.100 1 2.600.8.100-.6.300-1 .6-1.200-2-.2-4-1-4-4.300 0-1 .300-1.700.9-2.300-.1-.2-.4-1.100.1-2.300 0 0 .7-.2 2.400.9a8 8 0 0 1 4.400 0c1.700-1.100 2.400-.9 2.400-.9.500 1.200.2 2.100.1 2.300.6.600.9 1.400.9 2.300 0 3.300-2 4.100-4 4.300.3.300.6.800.6 1.600v3.400z" fill="#fff"/></svg>
<div class="a" style="left:794.6px;top:16px;width:7px;height:18px;overflow:hidden;font-size:15px;line-height:18px;color:#333;white-space:nowrap;-webkit-mask-image:linear-gradient(90deg,#000 20%,transparent 100%);mask-image:linear-gradient(90deg,#000 20%,transparent 100%)">Code</div>
<div class="a" style="left:812.75px;top:15.500px;width:2.500px;height:20px;background:#adc4f7;border-radius:1.250px"></div>
<svg style="left:827.5px;top:14.5px" width="20" height="20" viewBox="0 0 20 20"><circle cx="10" cy="10" r="9.600" fill="#e8304f"/><path d="M4 11.500a2.200 2.200 0 1 0 4.400 0 2.200 2.200 0 1 0-4.400 0M9.600 11.500a2.200 2.200 0 1 0 4.400 0V6M14 9.500l2.500-1" fill="none" stroke="#fff" stroke-width="1.200"/></svg>
<div class="a" style="left:858.4px;top:16px;width:7px;height:18px;overflow:hidden;font-size:15px;line-height:18px;color:#333;white-space:nowrap;-webkit-mask-image:linear-gradient(90deg,#000 20%,transparent 100%);mask-image:linear-gradient(90deg,#000 20%,transparent 100%)">Flow</div>
<div class="a" style="left:876.50px;top:15.500px;width:2.500px;height:20px;background:#adc4f7;border-radius:1.250px"></div>
<svg style="left:891.0px;top:14.5px" width="20" height="20" viewBox="0 0 20 20"><path d="M1 3c3 0 5.500 1.500 7 4.500 2-3 5-4.500 9-4-1.500 1.300-3 2.200-3.500 4.500-.6 3.500-3 6-5.500 9.500C8.500 13 5 12 3.500 7.500 3 5.800 2.200 4.200 1 3z" fill="#2196b8"/><path d="M17 3.500c-3.500 0-6 1.500-8 4.500l-1 9.500c2.500-3.500 5-6 5.500-9.500C14 5.700 15.500 4.800 17 3.500z" fill="#3cc2d8"/></svg>
<div class="a" style="left:922.1px;top:16px;width:7px;height:18px;overflow:hidden;font-size:15px;line-height:18px;color:#333;white-space:nowrap;-webkit-mask-image:linear-gradient(90deg,#000 20%,transparent 100%);mask-image:linear-gradient(90deg,#000 20%,transparent 100%)">kubernetes</div>
<div class="a" style="left:940.25px;top:15.500px;width:2.500px;height:20px;background:#adc4f7;border-radius:1.250px"></div>
<svg style="left:955.0px;top:14.5px" width="20" height="20" viewBox="0 0 20 20"><path d="M10 .8c.6 2.700 2.800 3.700 3.200 6.200 1-.6 1.200-1.600 1.200-2.400 2 2 3.100 4.300 3.100 6.600 0 4.300-3.300 7.600-7.500 7.600S2.500 15.500 2.500 11.200c0-2.600 1.500-4.500 2.700-5.700.1 1.200.6 2 1.500 2.500C6.500 4.500 8.500 3 10 .8z" fill="#e6522c"/><path d="M5.500 13.500h9M6.500 15.800h7" stroke="#fff" stroke-width="1.100"/></svg>
<div class="a" style="left:985.9px;top:16px;width:7px;height:18px;overflow:hidden;font-size:15px;line-height:18px;color:#333;white-space:nowrap;-webkit-mask-image:linear-gradient(90deg,#000 20%,transparent 100%);mask-image:linear-gradient(90deg,#000 20%,transparent 100%)">Charts</div>
<div class="a" style="left:1004.00px;top:15.500px;width:2.500px;height:20px;background:#adc4f7;border-radius:1.250px"></div>
<span class="t" style="left:1018.1px;top:13px;font-size:21px;line-height:24px;color:#111;letter-spacing:-1px">JF</span>
<div class="a" style="left:1049.6px;top:16px;width:7px;height:18px;overflow:hidden;font-size:15px;line-height:18px;color:#333;white-space:nowrap;-webkit-mask-image:linear-gradient(90deg,#000 20%,transparent 100%);mask-image:linear-gradient(90deg,#000 20%,transparent 100%)">Enterprise</div>
<div class="a" style="left:1067.75px;top:15.500px;width:2.500px;height:20px;background:#adc4f7;border-radius:1.250px"></div>
<svg style="left:1082.5px;top:14.5px" width="20" height="20" viewBox="0 0 20 20"><path d="M10 10C8.500 7.500 7 6.500 5 6.500a3.500 3.500 0 0 0 0 7c2 0 3.500-1 5-3.500zm0 0c1.500 2.500 3 3.500 5 3.500a3.500 3.500 0 0 0 0-7c-2 0-3.500 1-5 3.500z" fill="none" stroke="#f5822a" stroke-width="2"/><path d="M15 5l3-2M16.500 7l3-.5" stroke="#f5822a" stroke-width="1"/></svg>
<div class="a" style="left:1113.3px;top:16px;width:7px;height:18px;overflow:hidden;font-size:15px;line-height:18px;color:#333;white-space:nowrap;-webkit-mask-image:linear-gradient(90deg,#000 20%,transparent 100%);mask-image:linear-gradient(90deg,#000 20%,transparent 100%)">Apps</div>
<div class="a" style="left:1131.50px;top:15.500px;width:2.500px;height:20px;background:#adc4f7;border-radius:1.250px"></div>
<svg style="left:1146.0px;top:14.5px" width="20" height="20" viewBox="0 0 20 20"><path d="M4 12v6h11v-6" fill="none" stroke="#bcbbbb" stroke-width="1.600"/><path d="M6 15.500h7M6.200 12.600l6.900.9M7 9.500l6.500 2.400M8.800 6.300l5.700 4M11.700 3.500l4.200 5.600" stroke="#f48024" stroke-width="1.600"/></svg>
<div class="a" style="left:1177.1px;top:16px;width:7px;height:18px;overflow:hidden;font-size:15px;line-height:18px;color:#333;white-space:nowrap;-webkit-mask-image:linear-gradient(90deg,#000 20%,transparent 100%);mask-image:linear-gradient(90deg,#000 20%,transparent 100%)">kubectl</div>
<div class="a" style="left:1195.25px;top:15.500px;width:2.500px;height:20px;background:#adc4f7;border-radius:1.250px"></div>
<svg style="left:1211.0px;top:15.5px" width="18" height="18" viewBox="0 0 20 20"><circle cx="10" cy="10" r="9.2" fill="#5f6368"/><path d="M4 6.5c2-.3 3 .6 3.2 2 .2 1.300 1.800 1.200 2 2.800.1 1.200-1 1.700-1 3.200 0 1-.6 1.800-1.400 2.200C4.200 15.300 2.600 12.800 2.600 10c0-1.300.5-2.500 1.400-3.500zM11 2.700c2.800.4 5.200 2.400 6 5.100-1 .4-1.700-.1-2.600.2-1 .300-.9 1.500-2 1.500-1.200 0-1.700-1-1.500-2 .2-1-.9-1.300-.9-2.300 0-1 .5-1.700 1-2.500zM13.500 12c1 0 2 .6 2.600 1.400-.7 1.300-1.800 2.400-3.100 3.100-.5-.6-.8-1.400-.8-2.300 0-1.200.4-2.200 1.300-2.200z" fill="#fff" opacity=".85"/></svg>
<div class="a" style="left:1240.8px;top:16px;width:7px;height:18px;overflow:hidden;font-size:15px;line-height:18px;color:#333;white-space:nowrap;-webkit-mask-image:linear-gradient(90deg,#000 20%,transparent 100%);mask-image:linear-gradient(90deg,#000 20%,transparent 100%)">kubernetes</div>
<div class="a" style="left:1259.00px;top:15.500px;width:2.500px;height:20px;background:#adc4f7;border-radius:1.250px"></div>
<svg style="left:1274.5px;top:15.5px" width="18" height="18" viewBox="0 0 20 20"><circle cx="10" cy="10" r="9.2" fill="#5f6368"/><path d="M4 6.5c2-.3 3 .6 3.2 2 .2 1.300 1.800 1.200 2 2.800.1 1.200-1 1.700-1 3.200 0 1-.6 1.800-1.400 2.200C4.200 15.300 2.600 12.800 2.600 10c0-1.300.5-2.500 1.400-3.500zM11 2.700c2.800.4 5.200 2.400 6 5.100-1 .4-1.700-.1-2.600.2-1 .300-.9 1.500-2 1.500-1.200 0-1.700-1-1.500-2 .2-1-.9-1.300-.9-2.300 0-1 .5-1.700 1-2.500zM13.500 12c1 0 2 .6 2.600 1.400-.7 1.300-1.800 2.400-3.100 3.100-.5-.6-.8-1.400-.8-2.300 0-1.200.4-2.200 1.300-2.200z" fill="#fff" opacity=".85"/></svg>
<div class="a" style="left:1304.6px;top:16px;width:7px;height:18px;overflow:hidden;font-size:15px;line-height:18px;color:#333;white-space:nowrap;-webkit-mask-image:linear-gradient(90deg,#000 20%,transparent 100%);mask-image:linear-gradient(90deg,#000 20%,transparent 100%)">kubernetes</div>
<div class="a" style="left:1322.75px;top:15.500px;width:2.500px;height:20px;background:#adc4f7;border-radius:1.250px"></div>
<svg style="left:1337.5px;top:14.5px" width="20" height="20" viewBox="0 0 20 20"><circle cx="8" cy="5.500" r="4.500" fill="#fed10a"/><circle cx="14.500" cy="7" r="3.500" fill="#f04e98"/><circle cx="5" cy="11.500" r="3.800" fill="#24bbb1"/><circle cx="12.500" cy="14" r="4.500" fill="#00bfb3"/><circle cx="15.500" cy="11.500" r="2.800" fill="#1ba9f5"/><circle cx="7.500" cy="15.500" r="2.800" fill="#93c90e"/><circle cx="10" cy="10" r="2" fill="#fff"/></svg>
<div class="a" style="left:1368.3px;top:16px;width:7px;height:18px;overflow:hidden;font-size:15px;line-height:18px;color:#333;white-space:nowrap;-webkit-mask-image:linear-gradient(90deg,#000 20%,transparent 100%);mask-image:linear-gradient(90deg,#000 20%,transparent 100%)">cloud</div>
<div class="a" style="left:1386.50px;top:15.500px;width:2.500px;height:20px;background:#adc4f7;border-radius:1.250px"></div>
<svg style="left:1401.0px;top:14.5px" width="20" height="20" viewBox="0 0 20 20"><circle cx="10" cy="10" r="9.500" fill="#3c4043"/><circle cx="10" cy="10" r="4.300" fill="#d5e1fb"/><circle cx="10" cy="10" r="3" fill="#3c4043"/><path d="M10 5.700h8.500M6.300 12.200L2 4.800M13.700 12.200l-4.200 7.300" stroke="#d5e1fb" stroke-width="1.300"/></svg>
<div class="a" style="left:1432.1px;top:16px;width:7px;height:18px;overflow:hidden;font-size:15px;line-height:18px;color:#333;white-space:nowrap;-webkit-mask-image:linear-gradient(90deg,#000 20%,transparent 100%);mask-image:linear-gradient(90deg,#000 20%,transparent 100%)">New Tab</div>
<div class="a" style="left:1450.25px;top:15.500px;width:2.500px;height:20px;background:#adc4f7;border-radius:1.250px"></div>
<svg style="left:1466.0px;top:15.5px" width="18" height="18" viewBox="0 0 20 20"><circle cx="10" cy="10" r="9.2" fill="#5f6368"/><path d="M4 6.5c2-.3 3 .6 3.2 2 .2 1.300 1.800 1.200 2 2.800.1 1.200-1 1.700-1 3.200 0 1-.6 1.800-1.400 2.200C4.200 15.300 2.600 12.800 2.600 10c0-1.300.5-2.500 1.400-3.500zM11 2.700c2.800.4 5.200 2.400 6 5.100-1 .4-1.700-.1-2.600.2-1 .300-.9 1.500-2 1.500-1.200 0-1.700-1-1.500-2 .2-1-.9-1.300-.9-2.300 0-1 .5-1.700 1-2.500zM13.500 12c1 0 2 .6 2.600 1.400-.7 1.300-1.800 2.400-3.100 3.100-.5-.6-.8-1.400-.8-2.300 0-1.200.4-2.200 1.300-2.200z" fill="#fff" opacity=".85"/></svg>
<div class="a" style="left:1495.8px;top:16px;width:7px;height:18px;overflow:hidden;font-size:15px;line-height:18px;color:#333;white-space:nowrap;-webkit-mask-image:linear-gradient(90deg,#000 20%,transparent 100%);mask-image:linear-gradient(90deg,#000 20%,transparent 100%)">10.0</div>
<div class="a" style="left:1514.00px;top:15.500px;width:2.500px;height:20px;background:#adc4f7;border-radius:1.250px"></div>
<svg style="left:1529.5px;top:15.5px" width="18" height="18" viewBox="0 0 20 20"><circle cx="10" cy="10" r="9.2" fill="#5f6368"/><path d="M4 6.5c2-.3 3 .6 3.2 2 .2 1.300 1.800 1.200 2 2.800.1 1.200-1 1.700-1 3.200 0 1-.6 1.800-1.400 2.200C4.200 15.300 2.600 12.800 2.600 10c0-1.300.5-2.500 1.400-3.500zM11 2.700c2.800.4 5.200 2.400 6 5.100-1 .4-1.700-.1-2.600.2-1 .300-.9 1.500-2 1.500-1.200 0-1.700-1-1.500-2 .2-1-.9-1.300-.9-2.300 0-1 .5-1.700 1-2.500zM13.500 12c1 0 2 .6 2.600 1.400-.7 1.300-1.800 2.400-3.100 3.100-.5-.6-.8-1.400-.8-2.300 0-1.200.4-2.200 1.300-2.200z" fill="#fff" opacity=".85"/></svg>
<div class="a" style="left:1559.6px;top:16px;width:7px;height:18px;overflow:hidden;font-size:15px;line-height:18px;color:#333;white-space:nowrap;-webkit-mask-image:linear-gradient(90deg,#000 20%,transparent 100%);mask-image:linear-gradient(90deg,#000 20%,transparent 100%)">10.0</div>
<div class="a" style="left:1577.75px;top:15.500px;width:2.500px;height:20px;background:#adc4f7;border-radius:1.250px"></div>
<svg style="left:1592.5px;top:14.5px" width="20" height="20" viewBox="0 0 20 20"><rect x="0.500" y="0.500" width="19" height="19" rx="3.500" fill="#181616"/><path d="M7.600 18.300v-2.600c-2.400.5-3-1.100-3-1.100-.4-1-1-1.300-1-1.300-.8-.5.1-.5.1-.5.900.1 1.400.9 1.400.9.800 1.400 2.100 1 2.600.8.100-.6.300-1 .6-1.200-2-.2-4-1-4-4.300 0-1 .300-1.700.9-2.300-.1-.2-.4-1.100.1-2.300 0 0 .7-.2 2.400.9a8 8 0 0 1 4.400 0c1.700-1.100 2.400-.9 2.400-.9.500 1.200.2 2.100.1 2.300.6.600.9 1.400.9 2.300 0 3.300-2 4.100-4 4.300.3.300.6.800.6 1.600v3.400z" fill="#fff"/></svg>
<div class="a" style="left:1623.3px;top:16px;width:7px;height:18px;overflow:hidden;font-size:15px;line-height:18px;color:#333;white-space:nowrap;-webkit-mask-image:linear-gradient(90deg,#000 20%,transparent 100%);mask-image:linear-gradient(90deg,#000 20%,transparent 100%)">Untitled</div>
<div class="a" style="left:1641.50px;top:15.500px;width:2.500px;height:20px;background:#adc4f7;border-radius:1.250px"></div>
<svg style="left:1656px;top:18px;" width="14" height="14" viewBox="0 0 14 14"><path d="M7 .5v13M.5 7h13" stroke="#1f1f1f" stroke-width="1.800"/></svg>
<svg style="left:1771px;top:24px;" width="13" height="1" viewBox="0 0 13 1"><rect width="13" height="1" fill="#111"/></svg>
<svg style="left:1827px;top:18px;" width="13" height="13" viewBox="0 0 13 13"><rect x=".5" y="2.500" width="10" height="10" rx="1.500" fill="none" stroke="#111"/><path d="M2.500 2.500V2a1.500 1.500 0 0 1 1.500-1.500h7A1.500 1.500 0 0 1 12.500 2v7a1.500 1.500 0 0 1-1.500 1.500h-.5" fill="none" stroke="#111"/></svg>
<svg style="left:1884px;top:18px;" width="13" height="13" viewBox="0 0 13 13"><path d="M.5.500l12 12M12.500.500l-12 12" stroke="#111" stroke-width="1.100"/></svg>
<div class="a" style="left:0px;top:50px;width:1920px;height:55px;background:#fff;border-radius:10px 10px 0 0;"></div>
<svg style="left:18px;top:69px;" width="18" height="18" viewBox="0 0 18 18"><path d="M16.500 9H2.500M9 2.200L2.200 9 9 15.800" fill="none" stroke="#444746" stroke-width="1.900"/></svg>
<svg style="left:63px;top:69px;" width="18" height="18" viewBox="0 0 18 18"><path d="M1.500 9h14M9 2.200L15.800 9 9 15.800" fill="none" stroke="#b4b6b8" stroke-width="1.900"/></svg>
<svg style="left:108px;top:69px;" width="18" height="18" viewBox="0 0 18 18"><path d="M15.200 9.500A6.300 6.300 0 1 1 13.400 4.500" fill="none" stroke="#444746" stroke-width="1.900"/><path d="M15.800 1.500v5.700h-5.700z" fill="#444746"/></svg>
<div class="a" style="left:150px;top:58px;width:1390px;height:41.5px;background:#edf1fa;border-radius:21px;"></div>
<div class="a" style="left:156px;top:64px;width:113.5px;height:30px;background:#fff;border-radius:15px;"></div>
<svg style="left:163px;top:71px;" width="17" height="15.5" viewBox="0 0 17 15.500"><path d="M8.500 1.500L15.800 14.500H1.200z" fill="none" stroke="#1f1f1f" stroke-width="1.600" stroke-linejoin="round"/><path d="M8.500 6v4.500" stroke="#1f1f1f" stroke-width="1.500"/><circle cx="8.500" cy="12.300" r=".9" fill="#1f1f1f"/></svg>
<span class="t" style="left:186.65px;top:71px;font-size:15px;height:15px;line-height:15px;color:#1f1f1f;-webkit-text-stroke:0.3px #1f1f1f;letter-spacing:0.112px;">Not secure</span>
<span class="t" style="left:280.50px;top:72px;font-size:17.5px;height:17.5px;line-height:17.5px;color:#1f1f1f;letter-spacing:0.139px;">devtron-service-devtroncd.apps.ocp415.manishkr.nonprod.hclpnp.com/dashboard/app/dc/deployments/77/env/2/details/k8s-resources/pod/group/...</span>
<svg style="left:1460px;top:73px;" width="23" height="13" viewBox="0 0 23 13"><circle cx="6" cy="6.500" r="4.600" fill="none" stroke="#444746" stroke-width="2.400"/><path d="M10 5h12v3.500h-2V11h-3.500V8.500H10z" fill="#444746"/><circle cx="4.800" cy="6.500" r="1.300" fill="#444746"/></svg>
<svg style="left:1502px;top:69px;" width="19" height="19" viewBox="0 0 19 19"><path d="M9.500 1.800l2.400 5.300 5.700.6-4.300 3.900 1.200 5.700-5-2.900-5 2.900 1.200-5.700L1.400 7.700l5.700-.6z" fill="none" stroke="#444746" stroke-width="1.700" stroke-linejoin="round"/></svg>
<svg style="left:1564px;top:73px;" width="20" height="15" viewBox="0 0 20 15"><rect x="2.500" y="1" width="15" height="10" rx="1" fill="none" stroke="#b4b6b8" stroke-width="1.800"/><path d="M0 13.500h20" stroke="#b4b6b8" stroke-width="2"/></svg>
<svg style="left:1609.5px;top:68.5px;" width="21" height="20" viewBox="0 0 21 20"><path d="M2 5.500h4.800V4.300a2.300 2.300 0 0 1 4.600 0v1.200H16v4.300h1.200a2.300 2.300 0 0 1 0 4.600H16V18.500H2z" fill="none" stroke="#1f1f1f" stroke-width="2" stroke-linejoin="round"/></svg>
<div class="a" style="left:1652px;top:70px;width:2px;height:18px;background:#c3d3f7;border-radius:1px;"></div>
<svg style="left:1673.500px;top:65.200px" width="26" height="26" viewBox="0 0 27 27"><defs><clipPath id="avc"><circle cx="13.500" cy="13.500" r="13.500"/></clipPath></defs><g clip-path="url(#avc)"><rect width="27" height="27" fill="#c4123c"/><ellipse cx="13.500" cy="11.500" rx="5" ry="6" fill="#d79a78"/><path d="M8 9c0-4 2.500-6 5.500-6s5.500 2 5.500 6c-1.500-2-3-2.500-5.500-2.500S9.500 7 8 9z" fill="#221a18"/><path d="M3 27c0-6 4.500-8.500 10.500-8.500S24 21 24 27z" fill="#f0ede8"/></g></svg>
<div class="a" style="left:1714px;top:58px;width:197px;height:41.5px;background:#d5e1fb;border-radius:21px;"></div>
<span class="t" style="left:1729.00px;top:71px;font-size:15px;height:15px;line-height:15px;color:#1f1f1f;letter-spacing:-0.161px;">New Chrome available</span>
<div class="a" style="left:1890.5px;top:68px;width:4px;height:4px;background:#1f1f1f;border-radius:2px;"></div>
<div class="a" style="left:1890.5px;top:76.5px;width:4px;height:4px;background:#1f1f1f;border-radius:2px;"></div>
<div class="a" style="left:1890.5px;top:85px;width:4px;height:4px;background:#1f1f1f;border-radius:2px;"></div>
<div class="a" style="left:0px;top:105px;width:1920px;height:44px;background:#fff;"></div>
<svg style="left:15.5px;top:116.0px" width="19.0" height="19.0" viewBox="0 0 20 20"><circle cx="10" cy="10" r="9.2" fill="#5f6368"/><path d="M4 6.5c2-.3 3 .6 3.2 2 .2 1.300 1.800 1.200 2 2.800.1 1.200-1 1.700-1 3.200 0 1-.6 1.800-1.400 2.200C4.200 15.300 2.600 12.800 2.600 10c0-1.300.5-2.500 1.400-3.500zM11 2.700c2.800.4 5.200 2.400 6 5.100-1 .4-1.700-.1-2.600.2-1 .300-.9 1.500-2 1.500-1.200 0-1.700-1-1.500-2 .2-1-.9-1.300-.9-2.300 0-1 .5-1.700 1-2.500zM13.500 12c1 0 2 .6 2.600 1.400-.7 1.300-1.800 2.400-3.100 3.100-.5-.6-.8-1.400-.8-2.300 0-1.200.4-2.200 1.300-2.200z" fill="#fff" opacity=".85"/></svg>
<span class="t" style="left:42.00px;top:119px;font-size:14.8px;height:14.8px;line-height:14.8px;color:#1f1f1f;letter-spacing:-0.107px;">New Tab</span>
<svg style="left:123px;top:118px;" width="14" height="14" viewBox="0 0 14 14"><path d="M7 13C3.500 10 .5 7.500.5 4.500.5 2.500 2 1 3.800 1 5.200 1 6.300 1.800 7 3c.7-1.200 1.800-2 3.200-2C12 1 13.500 2.500 13.500 4.500c0 3-3 5.500-6.500 8.500z" fill="#2f6ee0"/><path d="M7 11.500C5 10 3 8 3 5.500" stroke="#7fb0ff" stroke-width="1.200" fill="none"/></svg>
<span class="t" style="left:147.50px;top:119px;font-size:14.8px;height:14.8px;line-height:14.8px;color:#1f1f1f;letter-spacing:-0.423px;">SuccessFactors Lear...</span>
<svg style="left:316px;top:118px;" width="12" height="15" viewBox="0 0 12 15"><path d="M2 6a4 4 0 0 1 6-3M10 5a4 4 0 0 1-4 6M4 13a4 4 0 0 0 5-3M1.500 10a4 4 0 0 1 4-4" fill="none" stroke="#2f8fe0" stroke-width="1.700"/></svg>
<span class="t" style="left:339.50px;top:119px;font-size:14.8px;height:14.8px;line-height:14.8px;color:#1f1f1f;letter-spacing:-0.897px;">HCL CDP</span>
<svg style="left:421.0px;top:116.5px" width="18" height="18" viewBox="0 0 20 20"><defs><linearGradient id="jg" x1="0" y1="0" x2="0" y2="1"><stop offset="0" stop-color="#2d86ff"/><stop offset="1" stop-color="#2468e6"/></linearGradient></defs><path d="M10 .5L19.500 10 10 19.500.5 10z" fill="url(#jg)"/><path d="M10 7L13 10 10 13 7 10z" fill="#fff"/></svg>
<span class="t" style="left:447.50px;top:119px;font-size:14.8px;height:14.8px;line-height:14.8px;color:#1f1f1f;letter-spacing:-0.164px;">Agile Board - HCL S...</span>
<svg style="left:613.5px;top:116.0px" width="19" height="19" viewBox="0 0 20 20"><rect x="0.500" y="0.500" width="19" height="19" rx="3.500" fill="#181616"/><path d="M7.600 18.300v-2.600c-2.400.5-3-1.100-3-1.100-.4-1-1-1.300-1-1.300-.8-.5.1-.5.1-.5.900.1 1.400.9 1.400.9.800 1.400 2.100 1 2.600.8.100-.6.300-1 .6-1.200-2-.2-4-1-4-4.300 0-1 .300-1.700.9-2.300-.1-.2-.4-1.100.1-2.300 0 0 .7-.2 2.400.9a8 8 0 0 1 4.400 0c1.700-1.100 2.400-.9 2.400-.9.500 1.200.2 2.100.1 2.300.6.600.9 1.400.9 2.300 0 3.300-2 4.100-4 4.300.3.300.6.800.6 1.600v3.400z" fill="#fff"/></svg>
<span class="t" style="left:640.00px;top:119px;font-size:14.8px;height:14.8px;line-height:14.8px;color:#1f1f1f;letter-spacing:0.135px;">GitHub</span>
<svg style="left:707.5px;top:115.5px;" width="20" height="20" viewBox="0 0 20 20"><circle cx="10" cy="10" r="7.200" fill="#fff" stroke="#1a1a8c" stroke-width="5"/></svg>
<span class="t" style="left:734.00px;top:119px;font-size:14.8px;height:14.8px;line-height:14.8px;color:#1f1f1f;letter-spacing:0.070px;">My Apps Dashboar...</span>
<svg style="left:900px;top:115.5px" width="20" height="20" viewBox="0 0 20 20"><path d="M4 20c0-4 2-6 6-6s6.500 2 6.500 6z" fill="#2c2f3a"/><path d="M8.500 14.500l1.500 3 1.500-3z" fill="#fff"/><path d="M9.300 15.500h1.400l.5 3.500H8.800z" fill="#c8202f"/><ellipse cx="10" cy="8.300" rx="5.300" ry="6" fill="#f0d6b7"/><path d="M4.500 7.500C4.200 3.500 6.500 1.200 10 1.200s6 2 5.600 6.300c-.8-2-2-3.200-5.600-3.200S5.300 5.500 4.500 7.500z" fill="#3a3335"/><path d="M6.500 11.500c1 2.500 6 2.500 7 0-.5 3-2 4-3.500 4s-3-1-3.500-4z" fill="#8a6a55"/></svg>
<span class="t" style="left:927.50px;top:119px;font-size:14.8px;height:14.8px;line-height:14.8px;color:#1f1f1f;letter-spacing:-0.285px;">[Jenkins]</span>
<svg style="left:1005.5px;top:116.5px" width="18" height="18" viewBox="0 0 20 20"><defs><linearGradient id="jg" x1="0" y1="0" x2="0" y2="1"><stop offset="0" stop-color="#2d86ff"/><stop offset="1" stop-color="#2468e6"/></linearGradient></defs><path d="M10 .5L19.500 10 10 19.500.5 10z" fill="url(#jg)"/><path d="M10 7L13 10 10 13 7 10z" fill="#fff"/></svg>
<span class="t" style="left:1031.50px;top:119px;font-size:14.8px;height:14.8px;line-height:14.8px;color:#1f1f1f;letter-spacing:-0.120px;">HCL Signals - Agile...</span>
<svg style="left:1197.5px;top:115.5px;" width="20" height="20" viewBox="0 0 20 20"><circle cx="10" cy="6.500" r="6" fill="#036c70"/><circle cx="14.500" cy="12" r="5" fill="#1a9ba1"/><circle cx="9" cy="15" r="4.500" fill="#37c6d0"/><rect x="0" y="5" width="9.500" height="9.500" rx="1" fill="#03787c"/><path d="M6.500 7.500c-2.500-1-4 .2-3.300 1.300.7 1 3.300.8 3.400 2.300.1 1.200-2 1.600-3.600.6" fill="none" stroke="#fff" stroke-width="1.100"/></svg>
<span class="t" style="left:1224.00px;top:119px;font-size:14.8px;height:14.8px;line-height:14.8px;color:#1f1f1f;letter-spacing:0.028px;">Unica Campaign - D...</span>
<svg style="left:1391px;top:116.5px;" width="18" height="18" viewBox="0 0 18 18"><path d="M9 .5l6.600 3.200 1.700 7.200-4.600 5.800H5.300L.7 10.900l1.700-7.200z" fill="#326ce5"/><circle cx="9" cy="9" r="3.200" fill="none" stroke="#fff" stroke-width="1.200"/><path d="M9 3v12M3.800 6l10.400 6M3.800 12l10.400-6" stroke="#fff" stroke-width="1"/></svg>
<span class="t" style="left:1416.50px;top:119px;font-size:14.8px;height:14.8px;line-height:14.8px;color:#1f1f1f;letter-spacing:-0.106px;">Persistent Volumes |...</span>
<svg style="left:1583.5px;top:115.5px" width="20" height="20" viewBox="0 0 20 20"><path d="M4 20c0-4 2-6 6-6s6.500 2 6.500 6z" fill="#2c2f3a"/><path d="M8.500 14.500l1.500 3 1.500-3z" fill="#fff"/><path d="M9.300 15.500h1.400l.5 3.500H8.800z" fill="#c8202f"/><ellipse cx="10" cy="8.300" rx="5.300" ry="6" fill="#f0d6b7"/><path d="M4.500 7.500C4.200 3.500 6.500 1.200 10 1.200s6 2 5.600 6.300c-.8-2-2-3.200-5.600-3.200S5.300 5.500 4.500 7.500z" fill="#3a3335"/><path d="M6.500 11.500c1 2.500 6 2.500 7 0-.5 3-2 4-3.500 4s-3-1-3.500-4z" fill="#8a6a55"/></svg>
<span class="t" style="left:1609.00px;top:119px;font-size:14.8px;height:14.8px;line-height:14.8px;color:#1f1f1f;letter-spacing:-0.077px;">Dashboard [Jenkins]...</span>
<svg style="left:1868.5px;top:120px;" width="13" height="11" viewBox="0 0 13 11"><path d="M1 1l4.500 4.500L1 10M7 1l4.500 4.500L7 10" fill="none" stroke="#1f1f1f" stroke-width="1.700"/></svg>
<div class="a" style="left:0px;top:1150px;width:1920px;height:50px;background:linear-gradient(90deg,#231a1a 0,#261d1d 60%,#302c2c 85%,#333030 100%);"></div>
<svg style="left:20px;top:1165px" width="20" height="20" viewBox="0 0 20 20"><path d="M0 2.800L8.200 1.700v7.800H0zM9.200 1.500L20 0v9.500H9.200zM0 10.500h8.200v7.800L0 17.200zM9.200 10.500H20V20L9.200 18.500z" fill="#fff"/></svg>
<div class="a" style="left:60px;top:1150px;width:360px;height:50px;background:#f2f2f2;border-top:1px solid #bcbcbc;border-bottom:1px solid #c4c4c4;"></div>
<svg style="left:75px;top:1164px" width="21" height="21" viewBox="0 0 21 21"><circle cx="13" cy="8" r="6.300" fill="none" stroke="#1b1b1b" stroke-width="1.600"/><path d="M8.500 12.500L1 20" stroke="#1b1b1b" stroke-width="1.600"/></svg>
<span class="t" style="left:110.70px;top:1167px;font-size:18.75px;height:18.75px;line-height:18.75px;color:#2b2b2b;letter-spacing:-0.155px;">Type here to search</span>
<svg style="left:327px;top:1155px" width="84" height="45" viewBox="0 0 84 45"><defs><linearGradient id="pl" x1="0" y1="0" x2="1" y2="1"><stop offset="0" stop-color="#3aa5f5"/><stop offset="1" stop-color="#0b5ed0"/></linearGradient></defs><circle cx="27.500" cy="19.500" r="17.500" fill="url(#pl)"/><g transform="rotate(22 27.500 19.500)"><path d="M11 12c8-5 22-6 32-1M10.500 19c9-4 24-5 34-1M12 26c8-3 21-4 31-1M16 32c7-2 16-2.500 23-.5" fill="none" stroke="#5db8ff" stroke-width="1.800" opacity=".75" clip-path="circle(17.300px at 27.500px 19.500px)"/><ellipse cx="23" cy="17" rx="5" ry="2.600" fill="#1668d8"/></g><path d="M4 4l1.500 3L9 8.500 5.500 10 4 13 2.500 10-1 8.500 2.500 7zM52 2l1 2.200 2.500 1-2.500 1L52 8.500l-1-2.300-2.500-1 2.500-1zM66 12l1 2 2 1-2 1-1 2-1-2-2-1 2-1zM45 25l.8 1.700 1.700.8-1.700.8-.8 1.700-.8-1.700-1.700-.8 1.700-.8z" fill="#f5c518"/><path d="M57 19.500l22.500 6-1.500 5.500-22.500-6z" fill="#b9b4d6"/><path d="M76.500 24.700l4 1.100-1.500 5.500-4-1.100zM59.500 20.200l3.500.9-1.500 5.500-3.500-.9z" fill="#8168d8"/><ellipse cx="57.500" cy="22.600" rx="2.300" ry="3.100" fill="#9fd0ff"/><path d="M68 29.500v15.500M68 31.500l-9 13.500M68 31.500l9 13.500" stroke="#5b3fa8" stroke-width="2" fill="none"/></svg>
<svg style="left:439px;top:1164px" width="22" height="22" viewBox="0 0 22 22"><g fill="none" stroke="#fff" stroke-width="1.400"><rect x="1.700" y="7.300" width="12.600" height="6.600"/><path d="M1.700 7.300V1.800M14.300 7.300V1.800M1.700 13.900v5.800M14.300 13.900v5.800M19.500 1v19.500"/></g><rect x="17.800" y="7.200" width="3.400" height="3.400" fill="#fff"/></svg>
<div class="a" style="left:754px;top:1150px;width:48.5px;height:50px;background:#4a4242;"></div>
<div class="a" style="left:802.5px;top:1150px;width:4px;height:50px;background:#3a3232;"></div>
<div class="a" style="left:488.5px;top:1197px;width:43px;height:3px;background:#82c1f0;"></div>
<div class="a" style="left:542.0px;top:1197px;width:43px;height:3px;background:#82c1f0;"></div>
<div class="a" style="left:703.5px;top:1197px;width:43px;height:3px;background:#82c1f0;"></div>
<div class="a" style="left:811.0px;top:1197px;width:43px;height:3px;background:#82c1f0;"></div>
<div class="a" style="left:920.0px;top:1197px;width:43px;height:3px;background:#82c1f0;"></div>
<div class="a" style="left:973.5px;top:1197px;width:43px;height:3px;background:#82c1f0;"></div>
<div class="a" style="left:1028.5px;top:1197px;width:43px;height:3px;background:#82c1f0;"></div>
<div class="a" style="left:1082.5px;top:1197px;width:43px;height:3px;background:#82c1f0;"></div>
<div class="a" style="left:1136.0px;top:1197px;width:43px;height:3px;background:#82c1f0;"></div>
<div class="a" style="left:1190.0px;top:1197px;width:43px;height:3px;background:#82c1f0;"></div>
<div class="a" style="left:1244.5px;top:1197px;width:43px;height:3px;background:#82c1f0;"></div>
<div class="a" style="left:1298.5px;top:1197px;width:43px;height:3px;background:#82c1f0;"></div>
<div class="a" style="left:1352.5px;top:1197px;width:43px;height:3px;background:#82c1f0;"></div>
<div class="a" style="left:1407.0px;top:1197px;width:43px;height:3px;background:#82c1f0;"></div>
<div class="a" style="left:1461.0px;top:1197px;width:43px;height:3px;background:#82c1f0;"></div>
<div class="a" style="left:1514.5px;top:1197px;width:43px;height:3px;background:#82c1f0;"></div>
<div class="a" style="left:1568.5px;top:1197px;width:43px;height:3px;background:#82c1f0;"></div>
<div class="a" style="left:754px;top:1197px;width:48.5px;height:3px;background:#9ccbf0;"></div>
<div class="a" style="left:580.0px;top:1197px;width:5px;height:3px;background:#4d83b5;"></div>
<div class="a" style="left:1120.5px;top:1197px;width:5px;height:3px;background:#4d83b5;"></div>
<div class="a" style="left:1174.0px;top:1197px;width:5px;height:3px;background:#4d83b5;"></div>
<svg style="left:495.0px;top:1159.5px" width="30" height="30" viewBox="0 0 30 30"><defs><linearGradient id="eg" x1="0" y1="0" x2="1" y2="1"><stop offset="0" stop-color="#35c1f1"/><stop offset=".6" stop-color="#1d7fd6"/><stop offset="1" stop-color="#0c59a4"/></linearGradient></defs><circle cx="15" cy="15" r="13.500" fill="url(#eg)"/><path d="M3 19c0-8 6-13 13-12 6 .8 10 5 9.500 9.500-.3 3-3 4.500-6 4-2-.3-1.500-2-1-3 .8-2-.5-5-4-5.500C10 11.500 6.500 15 8 20.500 4.500 21 3 20 3 19z" fill="#fff" opacity=".25"/><path d="M2 17c1 7 7 11 13 11 4 0 7-1.500 9-4-3 1.500-7 1-9.500-1.500S11.500 16 14 13c-5-1-10 1-12 4z" fill="#4fe05a" opacity=".85"/></svg>
<svg style="left:548.5px;top:1159.5px" width="30" height="30" viewBox="0 0 30 30"><path d="M1 6.500A1.500 1.500 0 0 1 2.500 5h8l2.500 2.500h14.500A1.500 1.500 0 0 1 29 9v14.500a1.500 1.500 0 0 1-1.500 1.500h-25A1.500 1.500 0 0 1 1 23.500z" fill="#e9a923"/><path d="M1 10h28v13.500a1.500 1.500 0 0 1-1.500 1.500h-25A1.500 1.500 0 0 1 1 23.500z" fill="#fbd35c"/><path d="M9 18h12v7H9z" fill="#3b8fd9"/><path d="M11.500 21.500h7" stroke="#fff" stroke-width="1.500"/></svg>
<svg style="left:602.5px;top:1159.5px" width="30" height="30" viewBox="0 0 30 30"><path d="M10 8V5.500A2.500 2.500 0 0 1 12.500 3h5A2.500 2.500 0 0 1 20 5.500V8" fill="none" stroke="#3aa0e8" stroke-width="1.600"/><rect x="2" y="8" width="26" height="20" rx="3" fill="#f4f4f6"/><rect x="9.500" y="12.500" width="5" height="5" fill="#f25022"/><rect x="15.500" y="12.500" width="5" height="5" fill="#7fba00"/><rect x="9.500" y="18.500" width="5" height="5" fill="#00a4ef"/><rect x="15.500" y="18.500" width="5" height="5" fill="#ffb900"/></svg>
<svg style="left:656.0px;top:1159.5px" width="30" height="30" viewBox="0 0 30 30"><rect x="4" y="2" width="20" height="15" rx="1" fill="#2b5aa8" stroke="#c9d3e0" stroke-width="1.500"/><path d="M6 4h16v11H6z" fill="#1c3f8f"/><path d="M10 17h8l1 4H9z" fill="#9aa7b8"/><rect x="6" y="21" width="16" height="2.500" fill="#c9d3e0"/><circle cx="21.500" cy="22" r="6.500" fill="#d9dee4"/><path d="M18 22l3-2.500v1.700h1v1.600h-1v1.700zM25 22l-3 2.500" fill="#2e9a3c" stroke="#2e9a3c" stroke-width=".8"/></svg>
<svg style="left:710.0px;top:1159.5px" width="30" height="30" viewBox="0 0 30 30"><rect x="3" y="1.500" width="12" height="9" fill="#2b5aa8" stroke="#1b2c50" stroke-width="1"/><rect x="11" y="6" width="12" height="9" fill="#3d6fc0" stroke="#1b2c50" stroke-width="1"/><path d="M9 16v-3a4 4 0 0 1 8 0v3" fill="none" stroke="#8a8d92" stroke-width="2.200"/><rect x="6" y="15.500" width="14" height="11.500" rx="1.500" fill="#5d6066"/><rect x="8" y="17.500" width="10" height="7.500" fill="#888b90"/><path d="M17 19l9 9M26 22v6h-6" fill="none" stroke="#27b04a" stroke-width="3"/></svg>
<svg style="left:763.5px;top:1159.5px" width="30" height="30" viewBox="0 0 30 30"><circle cx="15" cy="15" r="13.500" fill="#fff"/><path d="M15 1.500A13.500 13.500 0 0 1 26.700 8.250H15a6.750 6.750 0 0 0-5.850 3.375L3.300 8.250A13.500 13.500 0 0 1 15 1.500z" fill="#ea4335"/><path d="M26.700 8.250A13.500 13.500 0 0 1 15 28.500l5.850-10.125A6.750 6.750 0 0 0 20.850 11.600z" fill="#fbbc05"/><path d="M3.300 8.250A13.500 13.500 0 0 0 15 28.500l5.850-10.125A6.750 6.750 0 0 1 9.150 18.375z" fill="#34a853"/><circle cx="15" cy="15" r="6.200" fill="#fff"/><circle cx="15" cy="15" r="5" fill="#4285f4"/></svg>
<svg style="left:817.5px;top:1159.5px" width="30" height="30" viewBox="0 0 30 30"><path d="M9 3h17a2 2 0 0 1 2 2v12a2 2 0 0 1-2 2h-2v5l-5-5H9a2 2 0 0 1-2-2V5a2 2 0 0 1 2-2z" fill="#1e8e3e"/><path d="M4 9h15a2 2 0 0 1 2 2v11a2 2 0 0 1-2 2H11l-5 5v-5H4a2 2 0 0 1-2-2V11a2 2 0 0 1 2-2z" fill="#34c759"/></svg>
<svg style="left:872.5px;top:1159.5px" width="30" height="30" viewBox="0 0 30 30"><path d="M2 10l6-6h12v6z" fill="#ea4335"/><path d="M2 10h6v10H2z" fill="#4285f4"/><path d="M2 20h6v6H4a2 2 0 0 1-2-2z" fill="#1967d2"/><path d="M8 4h12a2 2 0 0 1 2 2v4H8z" fill="#fbbc05"/><path d="M8 20h14v4a2 2 0 0 1-2 2H8z" fill="#34a853"/><path d="M8 10h14v10H8z" fill="#fff" opacity="0"/><path d="M22 12l6-5v16l-6-5z" fill="#188038"/><path d="M14 10h8v10h-8z" fill="#2ba24c"/></svg>
<svg style="left:926.5px;top:1159.5px" width="30" height="30" viewBox="0 0 30 30"><path d="M2 2h26v17l-9 9H2z" fill="#f8d22f"/><path d="M28 19l-9 9v-9z" fill="#3b3a39"/></svg>
<svg style="left:980.0px;top:1159.5px" width="30" height="30" viewBox="0 0 30 30"><rect x="8" y="2" width="20" height="26" rx="2" fill="#21a366"/><path d="M18 2h8a2 2 0 0 1 2 2v6.500H18zM18 19.500h10V26a2 2 0 0 1-2 2h-8z" fill="#185c37"/><path d="M18 10.500h10v9H18z" fill="#107c41"/><rect x="1" y="7.500" width="15" height="15" rx="1.500" fill="#107c41"/><path d="M5.200 11l6.600 8M11.800 11l-6.600 8" stroke="#fff" stroke-width="2"/></svg>
<svg style="left:1035.0px;top:1159.5px" width="30" height="30" viewBox="0 0 30 30"><rect x="12" y="2" width="15" height="11" fill="#d8dde6" stroke="#2a2a6a" stroke-width="1"/><rect x="14" y="4" width="11" height="7" fill="#2233cc"/><rect x="2" y="14" width="15" height="11" fill="#d8dde6" stroke="#2a2a6a" stroke-width="1"/><rect x="4" y="16" width="11" height="7" fill="#2233cc"/><path d="M18 7l-4 6h4l-5 8" fill="none" stroke="#f8e020" stroke-width="2.500"/><path d="M1 27h17M11 15h17" stroke="#9aa0ad" stroke-width="2"/></svg>
<svg style="left:1089.0px;top:1159.5px" width="30" height="30" viewBox="0 0 30 30"><rect x="3" y="4" width="20" height="24" fill="#e8f0d0" stroke="#6a7f3a" stroke-width="1"/><path d="M3 4h20v4H3z" fill="#9bc53d"/><path d="M6 11h14M6 15h14M6 19h10" stroke="#7a9a3a" stroke-width="1.300"/><ellipse cx="11" cy="20" rx="6" ry="4.500" fill="#8fce3a"/><path d="M27 3L15 22l-2 5 4-3L29 5z" fill="#e8a030"/><path d="M27 3l2 2" stroke="#c03030" stroke-width="2"/></svg>
<svg style="left:1142.5px;top:1159.5px" width="30" height="30" viewBox="0 0 30 30"><rect x="8" y="2" width="20" height="26" rx="2" fill="#41a5ee"/><path d="M8 8.500h20v6.500H8z" fill="#2b7cd3"/><path d="M8 15h20v6.500H8z" fill="#185abd"/><path d="M8 21.500h20V26a2 2 0 0 1-2 2H10a2 2 0 0 1-2-2z" fill="#103f91"/><rect x="1" y="7.500" width="15" height="15" rx="1.500" fill="#185abd"/><path d="M4 11l2 8 2.500-8 2.500 8 2-8" fill="none" stroke="#fff" stroke-width="1.700"/></svg>
<svg style="left:1196.5px;top:1159.5px" width="30" height="30" viewBox="0 0 30 30"><rect x="1" y="4" width="28" height="22" fill="#0c0c0c" stroke="#c8c8c8" stroke-width="1.400"/><path d="M1 4h28v3.500H1z" fill="#e6e6e6"/><path d="M4 11h3M8 11h2M11 13h6" stroke="#ddd" stroke-width="1.200"/></svg>
<svg style="left:1251.0px;top:1159.5px" width="30" height="30" viewBox="0 0 30 30"><path d="M21.500 1.500L28 4.500v21l-6.500 3L9 17l-5 4-2.500-1.500v-9L4 9l5 4z" fill="#1f9cf0"/><path d="M21.500 1.500L28 4.500v21l-6.500 3z" fill="#0065a9"/><path d="M21.500 9.500v11L14 15z" fill="#231b1b"/><path d="M1.500 10.500L4 9l5 4-2 2z M1.500 19.500L4 21l5-4-2-2z" fill="#007acc"/></svg>
<svg style="left:1305.0px;top:1159.5px" width="30" height="30" viewBox="0 0 30 30"><g transform="rotate(45 15 15)"><rect x="4.500" y="4.500" width="10" height="10" fill="#e8583a"/><rect x="15.500" y="4.500" width="10" height="10" fill="#3a93d6"/><rect x="4.500" y="15.500" width="10" height="10" fill="#62b550"/><rect x="15.500" y="15.500" width="10" height="10" fill="#f5c242"/></g><path d="M15 7v16M15 12l5 5" stroke="#2a2626" stroke-width="2"/><circle cx="15" cy="8" r="2.300" fill="#2a2626"/><circle cx="15" cy="22" r="2.300" fill="#2a2626"/><circle cx="20.500" cy="17" r="2.300" fill="#2a2626"/></svg>
<svg style="left:1359.0px;top:1159.5px" width="30" height="30" viewBox="0 0 30 30"><circle cx="15" cy="15" r="14" fill="#f4f1ec" stroke="#2bb5c5" stroke-width="1.500"/><path d="M6 27c0-9 3-15 9-17 5-1.500 9 1 9 4 0 2-2 3.500-4 3.500 1.500 2 1.500 6 .5 9.500z" fill="#6b4a33"/><path d="M9 27c0-7 2-12 7-13.500 3-.8 5 .3 5 2s-2 2-3.500 2c1.300 2 1 6 .5 9.500z" fill="#f4f1ec"/><circle cx="18" cy="13" r="1.200" fill="#1a1a1a"/><ellipse cx="22.500" cy="14.500" rx="1.800" ry="1.300" fill="#1a1a1a"/></svg>
<svg style="left:1413.5px;top:1159.5px" width="30" height="30" viewBox="0 0 30 30"><circle cx="14" cy="15" r="13" fill="#f7941e"/><circle cx="16.500" cy="15" r="12.500" fill="#2c2255"/><path d="M5 11h23M4.500 15h24M5 19h23" stroke="#fff" stroke-width="2"/></svg>
<svg style="left:1467.5px;top:1159.5px" width="30" height="30" viewBox="0 0 30 30"><path d="M9 4h17a2 2 0 0 1 2 2v9H9z" fill="#1a9be6"/><path d="M9 4h9.500v5.500H9z" fill="#0a64b4"/><path d="M18.500 4H28v5.500h-9.500z" fill="#2fb5f2"/><path d="M9 15l19-5.500V24a2 2 0 0 1-2 2H9z" fill="#1373c4"/><path d="M9 26l19-12v10a2 2 0 0 1-2 2z" fill="#30b3f0"/><rect x="1" y="8" width="15" height="15" rx="1.500" fill="#0f6cbd"/><ellipse cx="8.500" cy="15.500" rx="3.600" ry="4.300" fill="none" stroke="#fff" stroke-width="2"/></svg>
<svg style="left:1521.0px;top:1159.5px" width="30" height="30" viewBox="0 0 30 30"><circle cx="15" cy="15" r="14" fill="#f26b3a"/><path d="M8 23l2-5 9-9c1.500-1.300 4 .8 2.600 2.600l-9 9z" fill="#fff"/><path d="M19 9l3 3" stroke="#f26b3a" stroke-width="1"/></svg>
<svg style="left:1575.0px;top:1159.5px" width="30" height="30" viewBox="0 0 30 30"><circle cx="20.500" cy="5.500" r="4" fill="#5b5fc7"/><circle cx="26.500" cy="8" r="2.700" fill="#5b5fc7"/><rect x="12" y="11" width="14" height="14" rx="3" fill="#5b5fc7"/><rect x="20" y="12" width="9.500" height="10" rx="3" fill="#4f52b2"/><rect x="0" y="8" width="15" height="15" rx="1.500" fill="#4b53bc"/><path d="M4 11.700h7M7.500 11.700v8" stroke="#fff" stroke-width="1.900"/><circle cx="22" cy="22.400" r="9.500" fill="#13a10e"/><path d="M17.500 22.500l3.200 3.200 5.800-6" fill="none" stroke="#fff" stroke-width="2.300"/></svg>
<svg style="left:1627px;top:1169px" width="16" height="9" viewBox="0 0 16 9"><path d="M1 8l7-7 7 7" fill="none" stroke="#fff" stroke-width="1.400"/></svg>
<svg style="left:1654px;top:1165px" width="24" height="20" viewBox="0 0 24 20"><path d="M5.500 12.500a4 4 0 0 1 .8-7.900 5.500 5.500 0 0 1 10.300 1.200A3.500 3.500 0 0 1 17 12.500z" fill="#2b88d8"/><circle cx="15.500" cy="13" r="6" fill="#2b88d8" stroke="#fff" stroke-width="1.200"/><path d="M12.500 13a3 3 0 0 1 5.500-1.500M18.500 13a3 3 0 0 1-5.500 1.500" fill="none" stroke="#fff" stroke-width="1.200"/></svg>
<svg style="left:1684px;top:1166px" width="22" height="16" viewBox="0 0 22 16"><rect x="4" y="4.500" width="16" height="9" fill="#fff"/><rect x="20" y="7" width="1.800" height="4" fill="#fff"/><path d="M1 3h5M3.500 1v4M3.500 5v3h2" fill="none" stroke="#fff" stroke-width="1.300"/></svg>
<svg style="left:1715px;top:1164px" width="22" height="20" viewBox="0 0 22 20"><g fill="none" stroke="#fff" stroke-width="1.300"><path d="M2 19A17 17 0 0 1 19 2" opacity=".95"/><path d="M6.500 19A12.500 12.500 0 0 1 19 6.500"/><path d="M11 19a8 8 0 0 1 8-8"/></g><circle cx="17.500" cy="17.500" r="1.800" fill="#fff"/></svg>
<svg style="left:1744px;top:1164px" width="24" height="20" viewBox="0 0 24 20"><path d="M1.500 7h3.500l4.500-4v14l-4.500-4H1.500z" fill="none" stroke="#fff" stroke-width="1.300" stroke-linejoin="round"/><path d="M12.500 7a4 4 0 0 1 0 6M15.500 4.500a8 8 0 0 1 0 11M18.500 2a11.500 11.500 0 0 1 0 16" fill="none" stroke="#fff" stroke-width="1.300"/></svg>
<span class="t" style="left:1786.00px;top:1156px;font-size:15.5px;height:15.5px;line-height:15.5px;color:#fff;letter-spacing:-0.885px;">6:35 PM</span>
<span class="t" style="left:1778.50px;top:1179px;font-size:15.5px;height:15.5px;line-height:15.5px;color:#fff;letter-spacing:-0.229px;">9/23/2024</span>
<svg style="left:1868px;top:1164px" width="22" height="22" viewBox="0 0 22 22"><path d="M1 1.500h20v14.500h-6V20.500l-4.500-4.500H1z" fill="none" stroke="#fff" stroke-width="1.400"/></svg>
<div class="a" style="left:1914px;top:1150px;width:1px;height:50px;background:#6a6262;"></div>
</body>
</html>
